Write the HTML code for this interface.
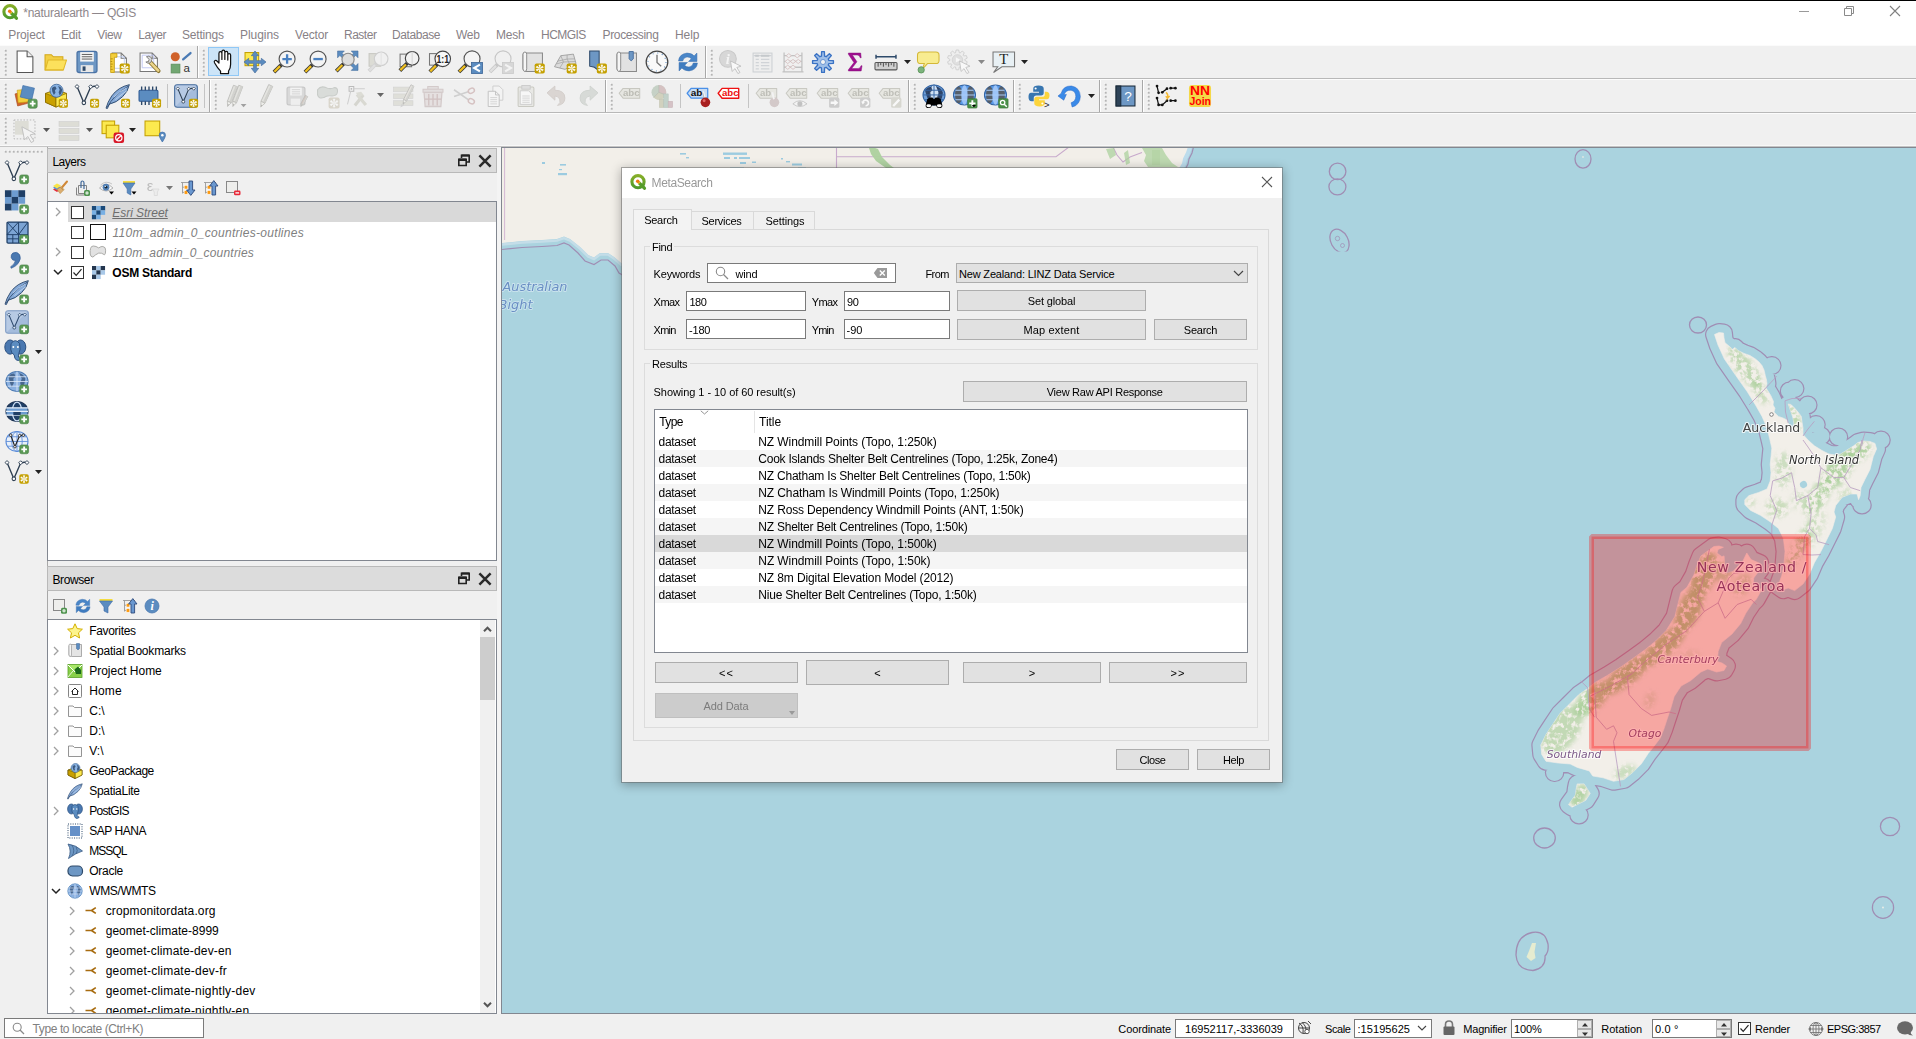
<!DOCTYPE html>
<html lang="en"><head><meta charset="utf-8"><title>*naturalearth — QGIS</title>
<style>
*{box-sizing:border-box;margin:0;padding:0}
html,body{width:1916px;height:1039px;overflow:hidden}
body{position:relative;background:#f0f0f0;font:12px "Liberation Sans",sans-serif;color:#000;-webkit-font-smoothing:antialiased}
.a{position:absolute}
.t{position:absolute;white-space:nowrap;line-height:14px}
.d{font-size:11px}
.btn{position:absolute;background:#e1e1e1;border:1px solid #adadad;text-align:center;font-size:11px;white-space:nowrap}
.inp{position:absolute;background:#fff;border:1px solid #7a7a7a;font-size:11px;white-space:nowrap}
.hl{position:absolute;height:1px}
.vl{position:absolute;width:1px}
.grp{position:absolute;border:1px solid #dcdcdc}
.ic{position:absolute;overflow:visible}
.row{position:absolute;left:1px;right:1px;height:17px}
</style></head>
<body>
<div class="a" style="left:0px;top:0px;width:1916px;height:1px;background:#000"></div>
<div class="a" style="left:0px;top:1px;width:1916px;height:44px;background:#fff"></div>
<svg class="ic" style="left:2px;top:4px" width="16" height="16" viewBox="0 0 16 16">
<defs><linearGradient id="qg2" x1="0" y1="0" x2="0" y2="1"><stop offset="0" stop-color="#86ae28"/><stop offset="1" stop-color="#4f9a2c"/></linearGradient></defs>
<circle cx="8" cy="7.7" r="6.1" fill="none" stroke="url(#qg2)" stroke-width="3.1"/>
<path d="M9.6 9.3 L14.4 14.2" stroke="#559c2a" stroke-width="3.3" stroke-linecap="round"/>
<path d="M8.4 8 L9.6 9.3" stroke="#d8c030" stroke-width="2.8" stroke-linecap="butt"/>
<circle cx="7.7" cy="7.2" r="1.75" fill="#ee7913"/>
</svg>
<div class="t" style="left:23.20px;top:6.00px;font-size:12px;letter-spacing:-0.229px;color:#8e878b">*naturalearth — QGIS</div>
<svg class="ic" style="left:1790px;top:2px" width="120" height="20" viewBox="0 0 120 20">
<path d="M9 9.5 H19" stroke="#9a9a9a" stroke-width="1" fill="none"/>
<path d="M54.5 6.5 H61.5 V13.5 H54.5 Z M56.5 6.5 V4.5 H63.5 V11.5 H61.5" stroke="#8a8a8a" stroke-width="1" fill="none"/>
<path d="M100 4 L110 14 M110 4 L100 14" stroke="#808080" stroke-width="1.1" fill="none"/>
</svg>
<div class="t" style="left:8.30px;top:27.60px;font-size:12px;letter-spacing:-0.121px;color:#878186">Project</div>
<div class="t" style="left:61.00px;top:27.60px;font-size:12px;letter-spacing:-0.219px;color:#878186">Edit</div>
<div class="t" style="left:97.20px;top:27.60px;font-size:12px;letter-spacing:-0.348px;color:#878186">View</div>
<div class="t" style="left:138.30px;top:27.60px;font-size:12px;letter-spacing:-0.464px;color:#878186">Layer</div>
<div class="t" style="left:182.00px;top:27.60px;font-size:12px;letter-spacing:-0.195px;color:#878186">Settings</div>
<div class="t" style="left:240.00px;top:27.60px;font-size:12px;letter-spacing:-0.051px;color:#878186">Plugins</div>
<div class="t" style="left:295.00px;top:27.60px;font-size:12px;letter-spacing:-0.170px;color:#878186">Vector</div>
<div class="t" style="left:344.00px;top:27.60px;font-size:12px;letter-spacing:-0.491px;color:#878186">Raster</div>
<div class="t" style="left:392.00px;top:27.60px;font-size:12px;letter-spacing:-0.421px;color:#878186">Database</div>
<div class="t" style="left:456.00px;top:27.60px;font-size:12px;letter-spacing:-0.286px;color:#878186">Web</div>
<div class="t" style="left:496.00px;top:27.60px;font-size:12px;letter-spacing:-0.236px;color:#878186">Mesh</div>
<div class="t" style="left:541.00px;top:27.60px;font-size:12px;letter-spacing:-0.533px;color:#878186">HCMGIS</div>
<div class="t" style="left:602.50px;top:27.60px;font-size:12px;letter-spacing:-0.336px;color:#878186">Processing</div>
<div class="t" style="left:675.00px;top:27.60px;font-size:12px;letter-spacing:-0.045px;color:#878186">Help</div>
<div class="a" style="left:0px;top:45px;width:1916px;height:1px;background:#fbfbfb"></div>
<div class="a" style="left:0px;top:78px;width:1916px;height:1px;background:#b8b8b8"></div>
<div class="a" style="left:0px;top:79px;width:1916px;height:1px;background:#fcfcfc"></div>
<div class="a" style="left:0px;top:112px;width:1916px;height:1px;background:#b8b8b8"></div>
<div class="a" style="left:0px;top:113px;width:1916px;height:1px;background:#fcfcfc"></div>
<svg class="ic" style="left:3.5px;top:49px" width="4" height="30"><rect x="0" y="0" width="2.6" height="2.6" fill="#fdfdfd"/><rect x=".7" y="0.7" width="2" height="2" fill="#b4b4b4"/><rect x="0" y="4" width="2.6" height="2.6" fill="#fdfdfd"/><rect x=".7" y="4.7" width="2" height="2" fill="#b4b4b4"/><rect x="0" y="8" width="2.6" height="2.6" fill="#fdfdfd"/><rect x=".7" y="8.7" width="2" height="2" fill="#b4b4b4"/><rect x="0" y="12" width="2.6" height="2.6" fill="#fdfdfd"/><rect x=".7" y="12.7" width="2" height="2" fill="#b4b4b4"/><rect x="0" y="16" width="2.6" height="2.6" fill="#fdfdfd"/><rect x=".7" y="16.7" width="2" height="2" fill="#b4b4b4"/><rect x="0" y="20" width="2.6" height="2.6" fill="#fdfdfd"/><rect x=".7" y="20.7" width="2" height="2" fill="#b4b4b4"/><rect x="0" y="24" width="2.6" height="2.6" fill="#fdfdfd"/><rect x=".7" y="24.7" width="2" height="2" fill="#b4b4b4"/></svg>
<svg class="ic" style="left:13.0px;top:49.8px" width="24" height="24" viewBox="0 0 24 24"><g transform="translate(12 12) scale(1.05) translate(-12 -12)"><path d="M4.5 1.5 H14 L19.5 7 V22 H4.5 Z" fill="#fff" stroke="#555" stroke-width="1"/><path d="M14 1.5 V7 H19.5" fill="#f0f0f0" stroke="#555" stroke-width="1" stroke-linejoin="round"/></g></svg>
<svg class="ic" style="left:43.0px;top:49.8px" width="24" height="24" viewBox="0 0 24 24"><g transform="translate(12 12) scale(1.05) translate(-12 -12)"><path d="M2.5 5 H8.5 L10.5 7 H19.5 V19.5 H2.5 Z" fill="#f2cf45" stroke="#d4a81a" stroke-width="1"/><path d="M2.8 19.5 L5.5 10 H23 L20 19.5 Z" fill="#fce15c" stroke="#e0b828" stroke-width="1" stroke-linejoin="round"/></g></svg>
<svg class="ic" style="left:75.0px;top:49.8px" width="24" height="24" viewBox="0 0 24 24"><g transform="translate(12 12) scale(1.05) translate(-12 -12)"><rect x="2.5" y="2" width="19" height="20" rx="1.8" fill="#6d97c4" stroke="#4a72a4" stroke-width="1.2"/><rect x="5.5" y="2.6" width="13" height="9" fill="#f6f6f6"/><path d="M7 4.8 H17 M7 7 H17 M7 9.2 H17" stroke="#555" stroke-width=".9"/><rect x="6" y="15" width="12" height="6.6" fill="#e8e8e8"/><rect x="7.8" y="16.2" width="2.8" height="4.2" fill="#2e4a6a"/></g></svg>
<svg class="ic" style="left:106.0px;top:49.8px" width="24" height="24" viewBox="0 0 24 24"><g transform="translate(12 12) scale(1.05) translate(-12 -12)"><path d="M6.5 3.5 H15 L20 8.5 V21.5 H6.5 Z" fill="#fff" stroke="#777" stroke-width="1"/><path d="M15 3.5 V8.5 H20" fill="none" stroke="#777"/><path d="M8.5 7 H18 V18 H8.5Z" fill="none" stroke="#b8c8f0" stroke-width=".8"/><path d="M5 4 H11 V7.5 H8.5 V22 H5 Z" fill="#f4cf3c" stroke="#c9a010" stroke-width=".8"/><path d="M5 9 H7 M5 11.5 H6.5 M5 14 H7 M5 16.5 H6.5 M5 19 H7" stroke="#a07c00" stroke-width=".7"/><rect x="13.6" y="13.4" width="9.6" height="9.6" rx="1.7" fill="#c4a000"/><path d="M18.40 18.60 L17.58 21.66 L19.22 21.66 Z M18.05 18.40 L15.00 19.22 L15.82 20.63 Z M18.05 18.00 L15.82 15.77 L15.00 17.18 Z M18.40 17.80 L19.22 14.74 L17.58 14.74 Z M18.75 18.00 L21.80 17.18 L20.98 15.77 Z M18.75 18.40 L20.98 20.63 L21.80 19.22 Z " fill="#fff" stroke="#fff" stroke-width=".5" stroke-linejoin="round"/></g></svg>
<svg class="ic" style="left:137.0px;top:49.8px" width="24" height="24" viewBox="0 0 24 24"><g transform="translate(12 12) scale(1.05) translate(-12 -12)"><path d="M3.5 3.5 H15 L20 8.5 V21 H3.5 Z" fill="#fff" stroke="#777" stroke-width="1"/><path d="M15 3.5 V8.5 H20" fill="none" stroke="#777"/><path d="M5.5 5.5 H16.5 V17.5 H5.5Z" fill="none" stroke="#b8c0f0" stroke-width=".8"/><path d="M13 12 L21 20.5" stroke="#8a7530" stroke-width="4" stroke-linecap="round"/><path d="M13.5 12.5 L20.8 20.2" stroke="#ecd58a" stroke-width="2.4" stroke-linecap="round"/><path d="M9.5 7 Q12 5.5 14 7.5 Q15.5 9.5 14 12 L12.5 13 Q10.5 13.5 9 12 L11.5 11.5 L12.2 9.5 Z" fill="#d8d8d8" stroke="#777" stroke-width=".8"/></g></svg>
<svg class="ic" style="left:168.0px;top:49.8px" width="24" height="24" viewBox="0 0 24 24"><g transform="translate(12 12) scale(1.05) translate(-12 -12)"><circle cx="7.5" cy="7" r="4.3" fill="#d0622a"/><rect x="3.5" y="14" width="8.5" height="8.5" fill="#72a772" stroke="#5a8a5a" stroke-width=".6"/><path d="M15 9.5 L22 3.5" stroke="#4a7ab4" stroke-width="2.2" stroke-linecap="round"/><text x="18.5" y="21.5" font-family="Liberation Sans,sans-serif" font-size="11" text-anchor="middle" fill="#333">a</text></g></svg>
<div class="a" style="left:197px;top:46px;width:1px;height:32px;background:#a8a8a8"></div><div class="a" style="left:198px;top:46px;width:1px;height:32px;background:#fff"></div>
<svg class="ic" style="left:201.5px;top:49px" width="4" height="30"><rect x="0" y="0" width="2.6" height="2.6" fill="#fdfdfd"/><rect x=".7" y="0.7" width="2" height="2" fill="#b4b4b4"/><rect x="0" y="4" width="2.6" height="2.6" fill="#fdfdfd"/><rect x=".7" y="4.7" width="2" height="2" fill="#b4b4b4"/><rect x="0" y="8" width="2.6" height="2.6" fill="#fdfdfd"/><rect x=".7" y="8.7" width="2" height="2" fill="#b4b4b4"/><rect x="0" y="12" width="2.6" height="2.6" fill="#fdfdfd"/><rect x=".7" y="12.7" width="2" height="2" fill="#b4b4b4"/><rect x="0" y="16" width="2.6" height="2.6" fill="#fdfdfd"/><rect x=".7" y="16.7" width="2" height="2" fill="#b4b4b4"/><rect x="0" y="20" width="2.6" height="2.6" fill="#fdfdfd"/><rect x=".7" y="20.7" width="2" height="2" fill="#b4b4b4"/><rect x="0" y="24" width="2.6" height="2.6" fill="#fdfdfd"/><rect x=".7" y="24.7" width="2" height="2" fill="#b4b4b4"/></svg>
<div class="a" style="left:208px;top:47px;width:31px;height:29px;background:#cce4f7;border:1px solid #90c8f6"></div>
<svg class="ic" style="left:211.0px;top:49.8px" width="24" height="24" viewBox="0 0 24 24"><g transform="translate(12 12) scale(1.05) translate(-12 -12)"><g transform="translate(12 12) scale(1.17) translate(-11.5 -12.6)"><path d="M8.2 13.5 V5.6 Q8.2 4.2 9.4 4.2 Q10.6 4.2 10.6 5.6 V10.5 V4.4 Q10.6 3 11.8 3 Q13 3 13 4.4 V10.5 V5.2 Q13 3.9 14.2 3.9 Q15.4 3.9 15.4 5.2 V11 V7 Q15.4 5.8 16.5 5.8 Q17.7 5.8 17.7 7 V14.5 Q17.7 18 16 20 V22 H9.5 V20 Q7 17.5 4.6 13.2 Q4 12 5 11.4 Q6 11 6.8 12 Z" fill="#fff" stroke="#111" stroke-width="1" stroke-linejoin="round"/></g></g></svg>
<svg class="ic" style="left:242.5px;top:49.8px" width="24" height="24" viewBox="0 0 24 24"><g transform="translate(12 12) scale(1.05) translate(-12 -12)"><rect x="2.5" y="3" width="13" height="12.5" fill="#fce94f" stroke="#c4a000" stroke-width="1"/><path d="M12 1.5 L15.5 6 H13.3 V10.7 H18 V8.5 L22.5 12 L18 15.5 V13.3 H13.3 V18 H15.5 L12 22.5 L8.5 18 H10.7 V13.3 H6 V15.5 L1.5 12 L6 8.5 V10.7 H10.7 V6 H8.5 Z" fill="#5b8cc0" stroke="#41699a" stroke-width=".6"/></g></svg>
<svg class="ic" style="left:273.0px;top:49.8px" width="24" height="24" viewBox="0 0 24 24"><g transform="translate(12 12) scale(1.05) translate(-12 -12)"><g opacity="1"><path d="M8.5 14.7 L1.5 21.7" stroke="#333" stroke-width="3.6" stroke-linecap="butt"/><path d="M7.3 15.9 L1.9 21.3" stroke="#f0c020" stroke-width="2.2"/><circle cx="14" cy="9.2" r="7.6" fill="#f4f4f4" stroke="#555" stroke-width="1.1"/></g><path d="M9.5 9.2 H18.5 M14 4.7 V13.7" stroke="#4a80c0" stroke-width="2.2"/></g></svg>
<svg class="ic" style="left:304.0px;top:49.8px" width="24" height="24" viewBox="0 0 24 24"><g transform="translate(12 12) scale(1.05) translate(-12 -12)"><g opacity="1"><path d="M8.5 14.7 L1.5 21.7" stroke="#333" stroke-width="3.6" stroke-linecap="butt"/><path d="M7.3 15.9 L1.9 21.3" stroke="#f0c020" stroke-width="2.2"/><circle cx="14" cy="9.2" r="7.6" fill="#f4f4f4" stroke="#555" stroke-width="1.1"/></g><path d="M9.5 9.2 H18.5" stroke="#4a80c0" stroke-width="2.2"/></g></svg>
<svg class="ic" style="left:335.0px;top:49.8px" width="24" height="24" viewBox="0 0 24 24"><g transform="translate(12 12) scale(1.05) translate(-12 -12)"><path d="M3 1.5 H9.5 L7.3 3.7 L10.5 7 L8.5 9 L5.2 5.8 L3 8 Z M22.5 1.5 V8 L20.3 5.8 L17 9 L15 7 L18.2 3.7 L16 1.5 Z M22.5 20 H16 L18.2 17.8 L15 14.5 L17 12.5 L20.3 15.8 L22.5 13.5 Z" fill="#5b8cc0" stroke="#41699a" stroke-width=".5"/><g opacity="1"><path d="M8.8 13.7 L1.8 20.7" stroke="#333" stroke-width="3.6" stroke-linecap="butt"/><path d="M7.6 14.9 L2.2 20.3" stroke="#f0c020" stroke-width="2.2"/><circle cx="13" cy="9.5" r="5.8" fill="#ddd" stroke="#888" stroke-width="1.1"/></g></g></svg>
<svg class="ic" style="left:366.0px;top:49.8px" width="24" height="24" viewBox="0 0 24 24"><g transform="translate(12 12) scale(1.05) translate(-12 -12)"><g opacity="0.82"><rect x="3.5" y="4" width="11" height="12" fill="#d8d8d0" stroke="#c0c0b8"/><g opacity="1"><path d="M10.3 13.7 L3.3 20.7" stroke="#ccc" stroke-width="3.6" stroke-linecap="butt"/><path d="M9.1 14.9 L3.7 20.3" stroke="#ddd" stroke-width="2.2"/><circle cx="15" cy="9" r="6.5" fill="#f0f0f0" stroke="#c8c8c8" stroke-width="1.1"/></g><path d="M15 2.5 V15.5" stroke="#ddd" stroke-width=".8"/></g></g></svg>
<svg class="ic" style="left:397.0px;top:49.8px" width="24" height="24" viewBox="0 0 24 24"><g transform="translate(12 12) scale(1.05) translate(-12 -12)"><rect x="3.5" y="4.5" width="11" height="12" fill="#ececec" stroke="#777"/><g opacity="1"><path d="M10.3 13.2 L3.3 20.2" stroke="#333" stroke-width="3.6" stroke-linecap="butt"/><path d="M9.1 14.4 L3.7 19.8" stroke="#f0c020" stroke-width="2.2"/><circle cx="15" cy="8.5" r="6.5" fill="#f2f2f2" stroke="#444" stroke-width="1.1"/></g><path d="M15 2 V15" stroke="#ccc" stroke-width=".8"/></g></svg>
<svg class="ic" style="left:428.0px;top:49.8px" width="24" height="24" viewBox="0 0 24 24"><g transform="translate(12 12) scale(1.05) translate(-12 -12)"><rect x="2" y="4" width="10" height="11" fill="#ececec" stroke="#777"/><g opacity="1"><path d="M9.3 14.3 L2.3 21.3" stroke="#333" stroke-width="3.6" stroke-linecap="butt"/><path d="M8.1 15.5 L2.7 20.9" stroke="#f0c020" stroke-width="2.2"/><circle cx="14.6" cy="9" r="7.4" fill="#f8f8f8" stroke="#444" stroke-width="1.1"/></g><text x="8.6" y="12.6" font-family="Liberation Sans,sans-serif" font-weight="bold" font-size="10" fill="#222" textLength="12" lengthAdjust="spacingAndGlyphs">1:1</text></g></svg>
<svg class="ic" style="left:459.0px;top:49.8px" width="24" height="24" viewBox="0 0 24 24"><g transform="translate(12 12) scale(1.05) translate(-12 -12)"><g opacity="1"><path d="M7.5 14.5 L0.5 21.5" stroke="#333" stroke-width="3.6" stroke-linecap="butt"/><path d="M6.3 15.7 L0.9 21.1" stroke="#f0c020" stroke-width="2.2"/><circle cx="13" cy="9" r="7.6" fill="#f4f4f4" stroke="#555" stroke-width="1.1"/></g><rect x="12.5" y="12.5" width="10.5" height="10.5" fill="#5b8cc0" stroke="#41699a" stroke-width=".8"/><path d="M20.5 14.5 L15 17.7 L20.5 21" stroke="#fff" stroke-width="2" fill="none"/></g></svg>
<svg class="ic" style="left:490.0px;top:49.8px" width="24" height="24" viewBox="0 0 24 24"><g transform="translate(12 12) scale(1.05) translate(-12 -12)"><g opacity="0.78"><g opacity="1"><path d="M7.5 14.5 L0.5 21.5" stroke="#bbb" stroke-width="3.6" stroke-linecap="butt"/><path d="M6.3 15.7 L0.9 21.1" stroke="#ddd" stroke-width="2.2"/><circle cx="13" cy="9" r="7.6" fill="#f0f0f0" stroke="#bbb" stroke-width="1.1"/></g><rect x="12.5" y="12.5" width="10.5" height="10.5" fill="#d0d0d0" stroke="#c0c0c0" stroke-width=".8"/><path d="M15 14.5 L20.5 17.7 L15 21" stroke="#f4f4f4" stroke-width="2" fill="none"/></g></g></svg>
<svg class="ic" style="left:521.0px;top:49.8px" width="24" height="24" viewBox="0 0 24 24"><g transform="translate(12 12) scale(1.05) translate(-12 -12)"><path d="M4 3.5 H21 V21 H6 Q2.5 21 2.5 18 V5 Q2.5 3.5 4 3.5" fill="#e2e2e2" stroke="#8a8a8a" stroke-width="1"/><path d="M2.5 4.5 Q2.5 2.5 4.3 2.5 Q6 2.5 6 4.5 V18.5 Q6 21 4.2 21 Q2.5 20.5 2.5 18.5 Z" fill="#f6f6f6" stroke="#8a8a8a" stroke-width=".9"/><rect x="13.6" y="13.4" width="9.6" height="9.6" rx="1.7" fill="#c4a000"/><path d="M18.40 18.60 L17.58 21.66 L19.22 21.66 Z M18.05 18.40 L15.00 19.22 L15.82 20.63 Z M18.05 18.00 L15.82 15.77 L15.00 17.18 Z M18.40 17.80 L19.22 14.74 L17.58 14.74 Z M18.75 18.00 L21.80 17.18 L20.98 15.77 Z M18.75 18.40 L20.98 20.63 L21.80 19.22 Z " fill="#fff" stroke="#fff" stroke-width=".5" stroke-linejoin="round"/></g></svg>
<svg class="ic" style="left:552.5px;top:49.8px" width="24" height="24" viewBox="0 0 24 24"><g transform="translate(12 12) scale(1.05) translate(-12 -12)"><path d="M2 16.5 L8 6 L20 4.5 L22.5 13.5 L12 19 Z" fill="#dcdcdc" stroke="#999" stroke-width=".8"/><path d="M5 11.2 L14 9.2 L21.3 9 M8 6 L10.5 12 L7 17.8 M14 5.2 L14 9.2 L17.5 16 M4 13.8 L10.5 12 L22 11.5" stroke="#a4a4a4" stroke-width=".7" fill="none"/><rect x="13.6" y="13.4" width="9.6" height="9.6" rx="1.7" fill="#c4a000"/><path d="M18.40 18.60 L17.58 21.66 L19.22 21.66 Z M18.05 18.40 L15.00 19.22 L15.82 20.63 Z M18.05 18.00 L15.82 15.77 L15.00 17.18 Z M18.40 17.80 L19.22 14.74 L17.58 14.74 Z M18.75 18.00 L21.80 17.18 L20.98 15.77 Z M18.75 18.40 L20.98 20.63 L21.80 19.22 Z " fill="#fff" stroke="#fff" stroke-width=".5" stroke-linejoin="round"/></g></svg>
<svg class="ic" style="left:584.0px;top:49.8px" width="24" height="24" viewBox="0 0 24 24"><g transform="translate(12 12) scale(1.05) translate(-12 -12)"><path d="M6 1.5 H15 V20.5 L10.5 17 L6 16 Z" fill="#6d97c4" stroke="#2e4a6a" stroke-width="1"/><rect x="12.8" y="13.4" width="9.6" height="9.6" rx="1.7" fill="#c4a000"/><path d="M17.60 18.60 L16.78 21.66 L18.42 21.66 Z M17.25 18.40 L14.20 19.22 L15.02 20.63 Z M17.25 18.00 L15.02 15.77 L14.20 17.18 Z M17.60 17.80 L18.42 14.74 L16.78 14.74 Z M17.95 18.00 L21.00 17.18 L20.18 15.77 Z M17.95 18.40 L20.18 20.63 L21.00 19.22 Z " fill="#fff" stroke="#fff" stroke-width=".5" stroke-linejoin="round"/></g></svg>
<svg class="ic" style="left:614.5px;top:49.8px" width="24" height="24" viewBox="0 0 24 24"><g transform="translate(12 12) scale(1.05) translate(-12 -12)"><path d="M4 3.5 H21 V21 H6 Q2.5 21 2.5 18 V5 Q2.5 3.5 4 3.5" fill="#e2e2e2" stroke="#8a8a8a" stroke-width="1"/><path d="M2.5 4.5 Q2.5 2.5 4.3 2.5 Q6 2.5 6 4.5 V18.5 Q6 21 4.2 21 Q2.5 20.5 2.5 18.5 Z" fill="#f6f6f6" stroke="#8a8a8a" stroke-width=".9"/><path d="M14 2 H18 V9 L16 11 L14 9 Z" fill="#6d97c4" stroke="#41699a" stroke-width=".8"/></g></svg>
<svg class="ic" style="left:645.0px;top:49.8px" width="24" height="24" viewBox="0 0 24 24"><g transform="translate(12 12) scale(1.05) translate(-12 -12)"><circle cx="12" cy="12" r="10.3" fill="#fafafa" stroke="#444" stroke-width="1.2"/><circle cx="12" cy="12" r="8.6" fill="none" stroke="#5b8cc0" stroke-width="1" stroke-dasharray="1 3.5"/><path d="M12 5 V12.5 L16 16" stroke="#777" stroke-width="1.3" fill="none"/></g></svg>
<svg class="ic" style="left:675.5px;top:49.8px" width="24" height="24" viewBox="0 0 24 24"><g transform="translate(12 12) scale(1.05) translate(-12 -12)"><path d="M3 11 Q3.5 4.5 11 3.5 Q15.5 3.5 17.8 6.2 L20.5 3.5 V11.5 H12.5 L15.2 8.8 Q13.5 7 11 7.2 Q7.5 7.8 7 11 Z" fill="#4a86c8" stroke="#3a70b0" stroke-width=".5"/><path d="M21 13 Q20.5 19.5 13 20.5 Q8.5 20.5 6.2 17.8 L3.5 20.5 V12.5 H11.5 L8.8 15.2 Q10.5 17 13 16.8 Q16.5 16.2 17 13 Z" fill="#3f7cc0" stroke="#3a70b0" stroke-width=".5"/></g></svg>
<div class="a" style="left:705px;top:46px;width:1px;height:32px;background:#a8a8a8"></div><div class="a" style="left:706px;top:46px;width:1px;height:32px;background:#fff"></div>
<svg class="ic" style="left:709.5px;top:49px" width="4" height="30"><rect x="0" y="0" width="2.6" height="2.6" fill="#fdfdfd"/><rect x=".7" y="0.7" width="2" height="2" fill="#b4b4b4"/><rect x="0" y="4" width="2.6" height="2.6" fill="#fdfdfd"/><rect x=".7" y="4.7" width="2" height="2" fill="#b4b4b4"/><rect x="0" y="8" width="2.6" height="2.6" fill="#fdfdfd"/><rect x=".7" y="8.7" width="2" height="2" fill="#b4b4b4"/><rect x="0" y="12" width="2.6" height="2.6" fill="#fdfdfd"/><rect x=".7" y="12.7" width="2" height="2" fill="#b4b4b4"/><rect x="0" y="16" width="2.6" height="2.6" fill="#fdfdfd"/><rect x=".7" y="16.7" width="2" height="2" fill="#b4b4b4"/><rect x="0" y="20" width="2.6" height="2.6" fill="#fdfdfd"/><rect x=".7" y="20.7" width="2" height="2" fill="#b4b4b4"/><rect x="0" y="24" width="2.6" height="2.6" fill="#fdfdfd"/><rect x=".7" y="24.7" width="2" height="2" fill="#b4b4b4"/></svg>
<svg class="ic" style="left:718.0px;top:49.8px" width="24" height="24" viewBox="0 0 24 24"><g transform="translate(12 12) scale(1.05) translate(-12 -12)"><g opacity="0.88"><circle cx="10" cy="9" r="8" fill="#d4d4d4" stroke="#c4c4c4"/><text x="10" y="14" font-family="Liberation Serif,serif" font-style="italic" font-weight="bold" font-size="14" text-anchor="middle" fill="#f4f4f4">i</text><path d="M12.5 11 L22.5 16 L18.5 17.2 L21.5 22 L19.5 23 L16.8 18.3 L14 21 Z" fill="#fafafa" stroke="#bbb" stroke-width=".9"/></g></g></svg>
<svg class="ic" style="left:750.0px;top:49.8px" width="24" height="24" viewBox="0 0 24 24"><g transform="translate(12 12) scale(1.05) translate(-12 -12)"><g opacity="0.88"><rect x="3.5" y="3.5" width="18" height="18" fill="#eeeeee" stroke="#c8ccd0"/><path d="M4 6 H21 M6 9.5 H9 M11 9.5 H19 M6 12.5 H9 M11 12.5 H19 M6 15.5 H9 M11 15.5 H19 M6 18.5 H9 M11 18.5 H19" stroke="#ccd0d4" stroke-width="1.2"/><path d="M5.5 6 H9 M11 6 H19" stroke="#c0c4c8" stroke-width="2"/></g></g></svg>
<svg class="ic" style="left:781.0px;top:49.8px" width="24" height="24" viewBox="0 0 24 24"><g transform="translate(12 12) scale(1.05) translate(-12 -12)"><g opacity="0.88"><path d="M3.5 3 V21 M20.5 3 V21 M2 21.5 H22 M3.5 6 H20.5 M3.5 11.5 H20.5 M3.5 17 H20.5" stroke="#bbb" stroke-width="1.2" fill="none"/><path d="M8 4 L10.5 6 L8 8 L5.5 6Z M16 4 L18.5 6 L16 8 L13.5 6Z M7 9.5 L9.5 11.5 L7 13.5 L4.5 11.5Z M12 9.5 L14.5 11.5 L12 13.5 L9.5 11.5Z M17 9.5 L19.5 11.5 L17 13.5 L14.5 11.5Z M7 15 L9.5 17 L7 19 L4.5 17Z M12 15 L14.5 17 L12 19 L9.5 17Z" fill="#f0f0f0" stroke="#d0b8b8" stroke-width=".8"/></g></g></svg>
<svg class="ic" style="left:811.0px;top:49.8px" width="24" height="24" viewBox="0 0 24 24"><g transform="translate(12 12) scale(1.05) translate(-12 -12)"><path d="M10.51 6.39 L10.70 2.08 L13.30 2.08 L13.49 6.39 L14.91 6.98 L18.09 4.07 L19.93 5.91 L17.02 9.09 L17.61 10.51 L21.92 10.70 L21.92 13.30 L17.61 13.49 L17.02 14.91 L19.93 18.09 L18.09 19.93 L14.91 17.02 L13.49 17.61 L13.30 21.92 L10.70 21.92 L10.51 17.61 L9.09 17.02 L5.91 19.93 L4.07 18.09 L6.98 14.91 L6.39 13.49 L2.08 13.30 L2.08 10.70 L6.39 10.51 L6.98 9.09 L4.07 5.91 L5.91 4.07 L9.09 6.98 Z" fill="#9fbfe8" stroke="#3a72c4" stroke-width="1.3" stroke-linejoin="round"/><circle cx="12" cy="12" r="2.4" fill="#f4f4f4" stroke="#3a72c4" stroke-width=".6"/></g></svg>
<svg class="ic" style="left:842.5px;top:49.8px" width="24" height="24" viewBox="0 0 24 24"><g transform="translate(12 12) scale(1.05) translate(-12 -12)"><g transform="translate(12 12) scale(.84 .9) translate(-12 -12)"><path d="M4.5 2.5 H18.5 L19 7.5 H17.8 Q17.3 4.6 14.5 4.6 H9 L14.2 11.8 L8.2 19 H15 Q18 19 18.8 16 H20 L19 21.5 H4.5 V20.3 L10.8 12.6 L4.5 3.8 Z" fill="#a01090" stroke="#800878" stroke-width=".5"/></g></g></svg>
<svg class="ic" style="left:873.5px;top:49.8px" width="24" height="24" viewBox="0 0 24 24"><g transform="translate(12 12) scale(1.05) translate(-12 -12)"><path d="M2 7 H22 M2.5 5 V9 M21.5 5 V9" stroke="#2e4a6a" stroke-width="1.4" fill="none"/><rect x="1.5" y="12.5" width="21" height="7" rx="1" fill="#d0d0d0" stroke="#555" stroke-width="1"/><path d="M4.5 13 V16.5 M7 13 V15 M9.5 13 V16.5 M12 13 V15 M14.5 13 V16.5 M17 13 V15 M19.5 13 V16.5" stroke="#444" stroke-width=".9"/></g></svg>
<svg class="ic" style="left:916.0px;top:49.8px" width="24" height="24" viewBox="0 0 24 24"><g transform="translate(12 12) scale(1.05) translate(-12 -12)"><path d="M5 2.5 H19.5 Q22.5 2.5 22.5 5.5 V10.5 Q22.5 13.5 19.5 13.5 H11.5 L6.5 19 L8.5 13.5 H5 Q2 13.5 2 10.5 V5.5 Q2 2.5 5 2.5 Z" fill="#f8ec90" stroke="#d4b838" stroke-width="1"/><circle cx="5.5" cy="19.5" r="3" fill="#7cb47c" stroke="#5a945a" stroke-width=".8"/></g></svg>
<svg class="ic" style="left:947.0px;top:49.8px" width="24" height="24" viewBox="0 0 24 24"><g transform="translate(12 12) scale(1.05) translate(-12 -12)"><g opacity="0.82"><path d="M8.70 3.24 L9.27 0.58 L11.73 0.58 L12.30 3.24 L13.02 3.47 L15.04 1.66 L17.03 3.10 L15.93 5.58 L16.38 6.20 L19.08 5.92 L19.84 8.26 L17.49 9.62 L17.49 10.38 L19.84 11.74 L19.08 14.08 L16.38 13.80 L15.93 14.42 L17.03 16.90 L15.04 18.34 L13.02 16.53 L12.30 16.76 L11.73 19.42 L9.27 19.42 L8.70 16.76 L7.98 16.53 L5.96 18.34 L3.97 16.90 L5.07 14.42 L4.62 13.80 L1.92 14.08 L1.16 11.74 L3.51 10.38 L3.51 9.62 L1.16 8.26 L1.92 5.92 L4.62 6.20 L5.07 5.58 L3.97 3.10 L5.96 1.66 L7.98 3.47 Z" fill="#eeeeee" stroke="#c4c4c4" stroke-width=".8" stroke-linejoin="round"/><circle cx="10.5" cy="10" r="5" fill="#dcdcdc" stroke="#c4c4c4" stroke-width=".6"/><path d="M9 7.5 L13.5 10 L9 12.5 Z" fill="#f8f8f8"/><path d="M12.5 11 L22.5 16 L18.5 17.2 L21.5 22 L19.5 23 L16.8 18.3 L14 21 Z" fill="#fafafa" stroke="#bbb" stroke-width=".9"/></g></g></svg>
<svg class="ic" style="left:990.5px;top:49.8px" width="24" height="24" viewBox="0 0 24 24"><g transform="translate(12 12) scale(1.05) translate(-12 -12)"><path d="M2.5 2.5 H23 V16.5 H11 L3 22 L7 16.5 H2.5 Z" fill="#e8f0f4" stroke="#777" stroke-width="1"/><text x="12.8" y="14" font-family="Liberation Serif,serif" font-size="14" text-anchor="middle" fill="#222">T</text></g></svg>
<svg class="ic" style="left:903.5px;top:60.0px" width="7" height="4" viewBox="0 0 7 4"><path d="M0 0 H7 L3.5 4 Z" fill="#222"/></svg>
<svg class="ic" style="left:977.5px;top:60.0px" width="7" height="4" viewBox="0 0 7 4"><path d="M0 0 H7 L3.5 4 Z" fill="#888"/></svg>
<svg class="ic" style="left:1020.5px;top:60.0px" width="7" height="4" viewBox="0 0 7 4"><path d="M0 0 H7 L3.5 4 Z" fill="#222"/></svg>
<svg class="ic" style="left:3.5px;top:83px" width="4" height="30"><rect x="0" y="0" width="2.6" height="2.6" fill="#fdfdfd"/><rect x=".7" y="0.7" width="2" height="2" fill="#b4b4b4"/><rect x="0" y="4" width="2.6" height="2.6" fill="#fdfdfd"/><rect x=".7" y="4.7" width="2" height="2" fill="#b4b4b4"/><rect x="0" y="8" width="2.6" height="2.6" fill="#fdfdfd"/><rect x=".7" y="8.7" width="2" height="2" fill="#b4b4b4"/><rect x="0" y="12" width="2.6" height="2.6" fill="#fdfdfd"/><rect x=".7" y="12.7" width="2" height="2" fill="#b4b4b4"/><rect x="0" y="16" width="2.6" height="2.6" fill="#fdfdfd"/><rect x=".7" y="16.7" width="2" height="2" fill="#b4b4b4"/><rect x="0" y="20" width="2.6" height="2.6" fill="#fdfdfd"/><rect x=".7" y="20.7" width="2" height="2" fill="#b4b4b4"/><rect x="0" y="24" width="2.6" height="2.6" fill="#fdfdfd"/><rect x=".7" y="24.7" width="2" height="2" fill="#b4b4b4"/></svg>
<svg class="ic" style="left:13.0px;top:84.0px" width="24" height="24" viewBox="0 0 24 24"><g transform="translate(12 12) scale(1.05) translate(-12 -12)"><path d="M2.5 10 L12 7.5 L14.5 19 L5 21.5 Z" fill="#d0622a" stroke="#a84a1a" stroke-width=".6"/><path d="M4.5 6.5 L14.5 5.5 L15.5 17.5 L5.5 18.5 Z" fill="#f4cf3c" stroke="#c9a010" stroke-width=".6"/><path d="M10 2 L21 4.5 L18.5 15.5 L7.5 13 Z" fill="#5b8cc0" stroke="#3a6aa8" stroke-width=".6"/><rect x="15" y="15" width="8.6" height="8.6" rx="1.8" fill="#5a9a55" stroke="#4a8045" stroke-width=".6"/><path d="M16.548000000000002 19.3 H22.052 M19.3 16.548000000000002 V22.052" stroke="#fff" stroke-width="1.8"/></g></svg>
<svg class="ic" style="left:44.0px;top:84.0px" width="24" height="24" viewBox="0 0 24 24"><g transform="translate(12 12) scale(1.05) translate(-12 -12)"><path d="M2 9.5 L12 6 L22 9.5 V18 L12 22.5 L2 18 Z" fill="#e8c818" stroke="#8a6c00" stroke-width=".9"/><path d="M2 9.5 L12 13.5 V22.5 L2 18 Z" fill="#c9a000" stroke="#8a6c00" stroke-width=".7"/><path d="M12 13.5 L22 9.5 V18 L12 22.5Z" fill="#fce94f" stroke="#8a6c00" stroke-width=".7"/><circle cx="12.5" cy="7" r="6.2" fill="#8ab4e4" stroke="#41699a" stroke-width=".8"/><path d="M8 4.5 Q9.5 2.5 11.5 3 L12.5 5 L11 6.5 L11.5 9 L10 11 L8.5 8 Z M14 2.5 Q17 3 18 6 L17 9.5 L15.5 11.5 L14.5 8.5 L15.5 6 Z" fill="#2e4a6e" opacity=".85"/><rect x="14.6" y="14.5" width="8.8" height="8.8" rx="1.7" fill="#c4a000"/><path d="M19.00 19.30 L18.25 22.07 L19.75 22.07 Z M18.65 19.10 L15.88 19.84 L16.63 21.13 Z M18.65 18.70 L16.63 16.67 L15.88 17.96 Z M19.00 18.50 L19.75 15.73 L18.25 15.73 Z M19.35 18.70 L22.12 17.96 L21.37 16.67 Z M19.35 19.10 L21.37 21.13 L22.12 19.84 Z " fill="#fff" stroke="#fff" stroke-width=".5" stroke-linejoin="round"/></g></svg>
<svg class="ic" style="left:75.0px;top:84.0px" width="24" height="24" viewBox="0 0 24 24"><g transform="translate(12 12) scale(1.05) translate(-12 -12)"><path d="M2.5 3 L9 18.5 L15.5 3.5 Q18.5 2.2 21.5 3" stroke="#2e3f52" stroke-width="1.3" fill="none"/><path d="M0.6000000000000001 3 L2.5 1.1 L4.4 3 L2.5 4.9 Z" fill="#fff" stroke="#2e3f52" stroke-width=".9"/><path d="M13.6 3.2 L15.5 1.3000000000000003 L17.4 3.2 L15.5 5.1 Z" fill="#fff" stroke="#2e3f52" stroke-width=".9"/><path d="M19.6 3 L21.5 1.1 L23.4 3 L21.5 4.9 Z" fill="#fff" stroke="#2e3f52" stroke-width=".9"/><circle cx="9" cy="18.5" r="1.7" fill="#fff" stroke="#2e3f52" stroke-width="1"/><rect x="14.9" y="14.7" width="8.6" height="8.6" rx="1.7" fill="#c4a000"/><path d="M19.20 19.40 L18.47 22.10 L19.93 22.10 Z M18.85 19.20 L16.15 19.91 L16.88 21.18 Z M18.85 18.80 L16.88 16.82 L16.15 18.09 Z M19.20 18.60 L19.93 15.90 L18.47 15.90 Z M19.55 18.80 L22.25 18.09 L21.52 16.82 Z M19.55 19.20 L21.52 21.18 L22.25 19.91 Z " fill="#fff" stroke="#fff" stroke-width=".5" stroke-linejoin="round"/></g></svg>
<svg class="ic" style="left:106.0px;top:84.0px" width="24" height="24" viewBox="0 0 24 24"><g transform="translate(12 12) scale(1.05) translate(-12 -12)"><path d="M22.8 1.2 Q12 3.6 6 12 Q2 18 0.6 23.6 L2 23.8 Q2.6 21.4 4.2 19.6 Q10.5 18.4 16.4 12.6 Q21.6 7.6 22.8 1.2 Z" fill="#86aad8" stroke="#2e4a6e" stroke-width=".9" stroke-linejoin="round"/><path d="M2 22.5 Q7.5 11.5 21.5 2.8" stroke="#2e4a6e" stroke-width=".8" fill="none"/><path d="M8 13 Q13 8 20 4.5 M9.5 15.5 Q14 11.5 20.5 7" stroke="#c4d8f0" stroke-width=".8" fill="none"/><rect x="14.9" y="14.7" width="8.6" height="8.6" rx="1.7" fill="#c4a000"/><path d="M19.20 19.40 L18.47 22.10 L19.93 22.10 Z M18.85 19.20 L16.15 19.91 L16.88 21.18 Z M18.85 18.80 L16.88 16.82 L16.15 18.09 Z M19.20 18.60 L19.93 15.90 L18.47 15.90 Z M19.55 18.80 L22.25 18.09 L21.52 16.82 Z M19.55 19.20 L21.52 21.18 L22.25 19.91 Z " fill="#fff" stroke="#fff" stroke-width=".5" stroke-linejoin="round"/></g></svg>
<svg class="ic" style="left:137.0px;top:84.0px" width="24" height="24" viewBox="0 0 24 24"><g transform="translate(12 12) scale(1.05) translate(-12 -12)"><rect x="2.5" y="6.5" width="18" height="10.5" rx="1" fill="#5b8cc0" stroke="#2e5a94" stroke-width="1"/><path d="M5 3 V6.5 M8.5 3 V6.5 M12 3 V6.5 M15.5 3 V6.5 M19 3 V6.5 M5 17 V20.5 M8.5 17 V20.5 M12 17 V20.5" stroke="#2e4a6a" stroke-width="1.3"/><rect x="14.9" y="14.7" width="8.6" height="8.6" rx="1.7" fill="#c4a000"/><path d="M19.20 19.40 L18.47 22.10 L19.93 22.10 Z M18.85 19.20 L16.15 19.91 L16.88 21.18 Z M18.85 18.80 L16.88 16.82 L16.15 18.09 Z M19.20 18.60 L19.93 15.90 L18.47 15.90 Z M19.55 18.80 L22.25 18.09 L21.52 16.82 Z M19.55 19.20 L21.52 21.18 L22.25 19.91 Z " fill="#fff" stroke="#fff" stroke-width=".5" stroke-linejoin="round"/></g></svg>
<svg class="ic" style="left:174.0px;top:84.0px" width="24" height="24" viewBox="0 0 24 24"><g transform="translate(12 12) scale(1.05) translate(-12 -12)"><rect x="1.2" y="1.2" width="21.6" height="21.6" rx="2.4" fill="#a4bcdc" stroke="#41699a" stroke-width="1"/><path d="M2 2 H22 L2 22 Z" fill="#c4d4ea" opacity=".6"/><g transform="translate(2.2 2.6) scale(.8)"><path d="M2.5 3 L9 18.5 L15.5 3.5 Q18.5 2.2 21.5 3" stroke="#2e3f52" stroke-width="1.3" fill="none"/><path d="M0.6000000000000001 3 L2.5 1.1 L4.4 3 L2.5 4.9 Z" fill="#fff" stroke="#2e3f52" stroke-width=".9"/><path d="M13.6 3.2 L15.5 1.3000000000000003 L17.4 3.2 L15.5 5.1 Z" fill="#fff" stroke="#2e3f52" stroke-width=".9"/><path d="M19.6 3 L21.5 1.1 L23.4 3 L21.5 4.9 Z" fill="#fff" stroke="#2e3f52" stroke-width=".9"/><circle cx="9" cy="18.5" r="1.7" fill="#fff" stroke="#2e3f52" stroke-width="1"/></g><rect x="14.9" y="14.7" width="8.6" height="8.6" rx="1.7" fill="#c4a000"/><path d="M19.20 19.40 L18.47 22.10 L19.93 22.10 Z M18.85 19.20 L16.15 19.91 L16.88 21.18 Z M18.85 18.80 L16.88 16.82 L16.15 18.09 Z M19.20 18.60 L19.93 15.90 L18.47 15.90 Z M19.55 18.80 L22.25 18.09 L21.52 16.82 Z M19.55 19.20 L21.52 21.18 L22.25 19.91 Z " fill="#fff" stroke="#fff" stroke-width=".5" stroke-linejoin="round"/></g></svg>
<div class="a" style="left:167px;top:84px;width:1px;height:24px;background:#c4c4c4"></div>
<div class="a" style="left:204px;top:84px;width:1px;height:24px;background:#c4c4c4"></div>
<div class="a" style="left:209px;top:80px;width:1px;height:32px;background:#a8a8a8"></div><div class="a" style="left:210px;top:80px;width:1px;height:32px;background:#fff"></div>
<svg class="ic" style="left:213.5px;top:83px" width="4" height="30"><rect x="0" y="0" width="2.6" height="2.6" fill="#fdfdfd"/><rect x=".7" y="0.7" width="2" height="2" fill="#b4b4b4"/><rect x="0" y="4" width="2.6" height="2.6" fill="#fdfdfd"/><rect x=".7" y="4.7" width="2" height="2" fill="#b4b4b4"/><rect x="0" y="8" width="2.6" height="2.6" fill="#fdfdfd"/><rect x=".7" y="8.7" width="2" height="2" fill="#b4b4b4"/><rect x="0" y="12" width="2.6" height="2.6" fill="#fdfdfd"/><rect x=".7" y="12.7" width="2" height="2" fill="#b4b4b4"/><rect x="0" y="16" width="2.6" height="2.6" fill="#fdfdfd"/><rect x=".7" y="16.7" width="2" height="2" fill="#b4b4b4"/><rect x="0" y="20" width="2.6" height="2.6" fill="#fdfdfd"/><rect x=".7" y="20.7" width="2" height="2" fill="#b4b4b4"/><rect x="0" y="24" width="2.6" height="2.6" fill="#fdfdfd"/><rect x=".7" y="24.7" width="2" height="2" fill="#b4b4b4"/></svg>
<svg class="ic" style="left:223.5px;top:84.0px" width="24" height="24" viewBox="0 0 24 24"><g transform="translate(12 12) scale(1.05) translate(-12 -12)"><g opacity="0.9"><g opacity="1"><path d="M9.6 1.8 L13.4 3.2 L7.5 18.4 L3.8 17.0 Z" fill="#e2e2de" stroke="#b4b4b0" stroke-width=".8" stroke-linejoin="round"/><path d="M11.5 2.5 L13.4 3.2 L7.5 18.4 L5.6 17.7 Z" fill="#cfcfcb"/><path d="M7.5 18.4 L3.8 17.0 L4.0 22.0 Z" fill="#eeeeea" stroke="#b4b4b0" stroke-width=".7" stroke-linejoin="round"/><path d="M5.3 20.2 L4.2 19.7 L4.0 22.0 Z" fill="#a8a8a4"/></g><g opacity="1"><path d="M14.6 1.8 L18.4 3.2 L12.5 18.4 L8.8 17.0 Z" fill="#e2e2de" stroke="#b4b4b0" stroke-width=".8" stroke-linejoin="round"/><path d="M16.5 2.5 L18.4 3.2 L12.5 18.4 L10.6 17.7 Z" fill="#cfcfcb"/><path d="M12.5 18.4 L8.8 17.0 L9.0 22.0 Z" fill="#eeeeea" stroke="#b4b4b0" stroke-width=".7" stroke-linejoin="round"/><path d="M10.3 20.2 L9.2 19.7 L9.0 22.0 Z" fill="#a8a8a4"/></g><path d="M16.5 19.5 H22 L19.2 22.8 Z" fill="#999"/></g></g></svg>
<svg class="ic" style="left:253.5px;top:84.0px" width="24" height="24" viewBox="0 0 24 24"><g transform="translate(12 12) scale(1.05) translate(-12 -12)"><g opacity="0.9"><g opacity="1"><path d="M14.6 1.1 L18.4 2.9 L11.0 18.9 L7.2 17.1 Z" fill="#e2e2de" stroke="#b4b4b0" stroke-width=".8" stroke-linejoin="round"/><path d="M16.5 2.0 L18.4 2.9 L11.0 18.9 L9.1 18.0 Z" fill="#cfcfcb"/><path d="M11.0 18.9 L7.2 17.1 L7.0 22.5 Z" fill="#eeeeea" stroke="#b4b4b0" stroke-width=".7" stroke-linejoin="round"/><path d="M8.5 20.8 L7.4 20.3 L7.0 22.5 Z" fill="#a8a8a4"/></g></g></g></svg>
<svg class="ic" style="left:284.0px;top:84.0px" width="24" height="24" viewBox="0 0 24 24"><g transform="translate(12 12) scale(1.05) translate(-12 -12)"><g opacity="0.82"><rect x="3.5" y="3.5" width="17" height="17" rx="1.8" fill="#d4d4d4" stroke="#c0c0c0" stroke-width="1.2"/><rect x="6.5" y="4" width="11" height="7.5" fill="#f4f4f4"/><path d="M8 6 H16 M8 8 H16 M8 10 H16" stroke="#ccc" stroke-width=".9"/><rect x="7" y="14.5" width="9" height="6" fill="#eee"/><g opacity="1"><path d="M20.9 11.4 L23.1 12.6 L18.8 20.4 L16.6 19.2 Z" fill="#d0c0b8" stroke="#b4b4b0" stroke-width=".8" stroke-linejoin="round"/><path d="M22.0 12.0 L23.1 12.6 L18.8 20.4 L17.7 19.8 Z" fill="#cfcfcb"/><path d="M18.8 20.4 L16.6 19.2 L16.5 22.0 Z" fill="#eeeeea" stroke="#b4b4b0" stroke-width=".7" stroke-linejoin="round"/><path d="M18.1 20.4 L17.0 19.8 L16.5 22.0 Z" fill="#a8a8a4"/></g></g></g></svg>
<svg class="ic" style="left:315.0px;top:84.0px" width="24" height="24" viewBox="0 0 24 24"><g transform="translate(12 12) scale(1.05) translate(-12 -12)"><g opacity="0.82"><path d="M3 6 Q6 2 11 4 Q15 6 19 4 Q22.5 4 22 8 Q21.5 12 17 12 Q12 11 9 13.5 Q4 15 3 11 Z" fill="#d4d8d4" stroke="#c0c4c0" stroke-width="1"/><rect x="13.5" y="13.5" width="10.5" height="10.5" rx="1.7" fill="#d4d0c4"/><path d="M18.75 19.15 L17.86 22.53 L19.64 22.53 Z M18.40 18.95 L15.03 19.87 L15.92 21.41 Z M18.40 18.55 L15.92 16.09 L15.03 17.63 Z M18.75 18.35 L19.64 14.97 L17.86 14.97 Z M19.10 18.55 L22.47 17.63 L21.58 16.09 Z M19.10 18.95 L21.58 21.41 L22.47 19.87 Z " fill="#f8f8f8" stroke="#f8f8f8" stroke-width=".5" stroke-linejoin="round"/></g></g></svg>
<svg class="ic" style="left:346.0px;top:84.0px" width="24" height="24" viewBox="0 0 24 24"><g transform="translate(12 12) scale(1.05) translate(-12 -12)"><g opacity="0.82"><rect x="3.5" y="3" width="4.5" height="4.5" fill="#f4f4f4" stroke="#aaa" stroke-width=".9"/><circle cx="5.7" cy="5.2" r=".9" fill="#aaa"/><path d="M8 5 H18.5 M5 7.5 L2 20" stroke="#c8c8c8" stroke-width="1"/><path d="M9 21 L17 11" stroke="#d0d0c8" stroke-width="3"/><path d="M11 10.5 L19.5 20.5" stroke="#d4d4cc" stroke-width="3"/><path d="M10 9 L15 8 L17.5 11 L12.5 13 Z" fill="#d8d8d0"/></g></g></svg>
<svg class="ic" style="left:390.5px;top:84.0px" width="24" height="24" viewBox="0 0 24 24"><g transform="translate(12 12) scale(1.05) translate(-12 -12)"><g opacity="0.82"><rect x="3" y="3.5" width="18.5" height="4.5" fill="#dcdcd4" stroke="#ccc" stroke-width=".6"/><rect x="3" y="10" width="18.5" height="4.5" fill="#dcdcd4" stroke="#ccc" stroke-width=".6"/><rect x="3" y="16.5" width="18.5" height="4.5" fill="#dcdcd4" stroke="#ccc" stroke-width=".6"/><g opacity="1"><path d="M19.6 1.3 L22.4 2.7 L15.4 16.8 L12.5 15.3 Z" fill="#e4e0dc" stroke="#b4b4b0" stroke-width=".8" stroke-linejoin="round"/><path d="M21.0 2.0 L22.4 2.7 L15.4 16.8 L14.0 16.0 Z" fill="#cfcfcb"/><path d="M15.4 16.8 L12.5 15.3 L12.0 20.0 Z" fill="#eeeeea" stroke="#b4b4b0" stroke-width=".7" stroke-linejoin="round"/><path d="M13.5 18.3 L12.4 17.8 L12.0 20.0 Z" fill="#a8a8a4"/></g><path d="M10.5 19.5 L9.5 23 L13 21Z" fill="#ccc"/></g></g></svg>
<svg class="ic" style="left:421.0px;top:84.0px" width="24" height="24" viewBox="0 0 24 24"><g transform="translate(12 12) scale(1.05) translate(-12 -12)"><g opacity="0.78"><path d="M3.5 8.5 H20.5 L19.5 22 H4.5 Z" fill="#e2dcdc" stroke="#ccc0c0" stroke-width="1.2"/><path d="M2.5 5.5 H21.5 V8.5 H2.5 Z M7 3 H17 V5.5 H7Z" fill="#dfd9d9" stroke="#ccc0c0" stroke-width="1"/><path d="M8 10 V21 M12 10 V21 M16 10 V21 M4 15 H20" stroke="#c8b4b4" stroke-width="1.2"/></g></g></svg>
<svg class="ic" style="left:452.0px;top:84.0px" width="24" height="24" viewBox="0 0 24 24"><g transform="translate(12 12) scale(1.05) translate(-12 -12)"><g opacity="0.82"><path d="M2.5 6 L16 15.5 M2.5 12.5 L16 8" stroke="#c8c8c8" stroke-width="1.6"/><ellipse cx="19" cy="7" rx="3" ry="2.3" fill="none" stroke="#d0b8b8" stroke-width="1.4" transform="rotate(-25 19 7)"/><ellipse cx="19" cy="17" rx="3" ry="2.3" fill="none" stroke="#d0b8b8" stroke-width="1.4" transform="rotate(25 19 17)"/></g></g></svg>
<svg class="ic" style="left:482.5px;top:84.0px" width="24" height="24" viewBox="0 0 24 24"><g transform="translate(12 12) scale(1.05) translate(-12 -12)"><g opacity="0.88"><path d="M10 2.5 H16 L19.5 6 V16 H10Z" fill="#f4f4f4" stroke="#c8c8c8" stroke-width=".9"/><path d="M5.5 7.5 H12.5 L16 11 V22 H5.5Z" fill="#f6f6f6" stroke="#bbb" stroke-width=".9"/><path d="M12.5 7.5 V11 H16" fill="none" stroke="#bbb" stroke-width=".9"/><path d="M7.5 13.5 H14 M7.5 15.5 H14 M7.5 17.5 H14 M7.5 19.5 H14" stroke="#ccc" stroke-width=".8"/></g></g></svg>
<svg class="ic" style="left:513.5px;top:84.0px" width="24" height="24" viewBox="0 0 24 24"><g transform="translate(12 12) scale(1.05) translate(-12 -12)"><g opacity="0.88"><rect x="4.5" y="3.5" width="15" height="18.5" rx="1" fill="#e8e8e4" stroke="#c4c4bc" stroke-width="1"/><rect x="8" y="2" width="8" height="3.5" fill="#dcdcdc" stroke="#c4c4c4" stroke-width=".8"/><path d="M6.5 7 H14.5 L17.5 10 V20 H6.5Z" fill="#f8f8f8" stroke="#c4c4c4" stroke-width=".8"/><path d="M8.5 12 H15.5 M8.5 14 H15.5 M8.5 16 H15.5 M8.5 18 H15.5" stroke="#ccc" stroke-width=".8"/></g></g></svg>
<svg class="ic" style="left:544.5px;top:84.0px" width="24" height="24" viewBox="0 0 24 24"><g transform="translate(12 12) scale(1.05) translate(-12 -12)"><g opacity="0.88"><path d="M2.5 9 L10 2.5 V6.5 Q19.5 6.5 19.5 14 Q19.5 20 12.5 21 Q16 18.5 14.5 15 Q13 12 10 12 V16 Z" fill="#d8d2ce" stroke="#ccc6c2" stroke-width=".8"/></g></g></svg>
<svg class="ic" style="left:576.0px;top:84.0px" width="24" height="24" viewBox="0 0 24 24"><g transform="translate(12 12) scale(1.05) translate(-12 -12)"><g opacity="0.88"><path d="M21.5 9 L14 2.5 V6.5 Q4.5 6.5 4.5 14 Q4.5 20 11.5 21 Q8 18.5 9.5 15 Q11 12 14 12 V16 Z" fill="#d4d8d4" stroke="#c8ccc8" stroke-width=".8"/></g></g></svg>
<svg class="ic" style="left:376.5px;top:93.0px" width="7" height="4" viewBox="0 0 7 4"><path d="M0 0 H7 L3.5 4 Z" fill="#666"/></svg>
<div class="a" style="left:605px;top:80px;width:1px;height:32px;background:#a8a8a8"></div><div class="a" style="left:606px;top:80px;width:1px;height:32px;background:#fff"></div>
<svg class="ic" style="left:609.5px;top:83px" width="4" height="30"><rect x="0" y="0" width="2.6" height="2.6" fill="#fdfdfd"/><rect x=".7" y="0.7" width="2" height="2" fill="#b4b4b4"/><rect x="0" y="4" width="2.6" height="2.6" fill="#fdfdfd"/><rect x=".7" y="4.7" width="2" height="2" fill="#b4b4b4"/><rect x="0" y="8" width="2.6" height="2.6" fill="#fdfdfd"/><rect x=".7" y="8.7" width="2" height="2" fill="#b4b4b4"/><rect x="0" y="12" width="2.6" height="2.6" fill="#fdfdfd"/><rect x=".7" y="12.7" width="2" height="2" fill="#b4b4b4"/><rect x="0" y="16" width="2.6" height="2.6" fill="#fdfdfd"/><rect x=".7" y="16.7" width="2" height="2" fill="#b4b4b4"/><rect x="0" y="20" width="2.6" height="2.6" fill="#fdfdfd"/><rect x=".7" y="20.7" width="2" height="2" fill="#b4b4b4"/><rect x="0" y="24" width="2.6" height="2.6" fill="#fdfdfd"/><rect x=".7" y="24.7" width="2" height="2" fill="#b4b4b4"/></svg>
<svg class="ic" style="left:617.0px;top:84.0px" width="24" height="24" viewBox="0 0 24 24"><g transform="translate(12 12) scale(1.05) translate(-12 -12)"><g opacity="0.92" transform="translate(0 0)"><path d="M2.6 9.4 L6.4 4.8 H22.2 V14.1 H6.4 Z" fill="#e6e6e0" stroke="#c4c4bc" stroke-width="1" stroke-linejoin="round"/><text x="14.1" y="12.3" font-family="Liberation Sans,sans-serif" font-weight="bold" font-size="9.2" text-anchor="middle" fill="#b8b8b0">abc</text></g></g></svg>
<svg class="ic" style="left:650.0px;top:84.0px" width="24" height="24" viewBox="0 0 24 24"><g transform="translate(12 12) scale(1.05) translate(-12 -12)"><g opacity="0.95"><circle cx="9" cy="8.5" r="7" fill="#c4d0c4"/><path d="M9 8.5 L9 1.5 A7 7 0 0 1 15.5 11 Z" fill="#d4c0c0"/><path d="M9 8.5 L15.5 11 A7 7 0 0 1 4 13.5 Z" fill="#d0d0bc"/><path d="M9 8.5 L9 1.5 M9 8.5 L15.5 11 M9 8.5 L4 13.5" stroke="#b4b8b0" stroke-width=".6"/><rect x="9.5" y="15" width="4.2" height="8" fill="#d0d0bc" stroke="#c0c0b0" stroke-width=".5"/><rect x="13.7" y="10" width="4.2" height="13" fill="#c0d0c8" stroke="#b0c0b8" stroke-width=".5"/><rect x="17.9" y="17" width="4.2" height="6" fill="#d4c0c4" stroke="#c4b0b4" stroke-width=".5"/></g></g></svg>
<svg class="ic" style="left:685.0px;top:84.0px" width="24" height="24" viewBox="0 0 24 24"><g transform="translate(12 12) scale(1.05) translate(-12 -12)"><path d="M2.6 9.4 L6.4 4.8 H22.2 V14.1 H6.4 Z" fill="#c8dcf4" stroke="#4a90e8" stroke-width="1.2" stroke-linejoin="round"/><text x="11.6" y="12.3" font-family="Liberation Sans,sans-serif" font-weight="bold" font-size="9.5" text-anchor="middle" fill="#111">ab</text><path d="M18 8.5 L19.6 15" stroke="#f4f4f4" stroke-width="1.8" stroke-linecap="round"/><path d="M17.4 8.8 L18.8 14" stroke="#888" stroke-width=".5"/><circle cx="20" cy="18" r="4.6" fill="#a82020"/><circle cx="18.8" cy="16.6" r="1.4" fill="#e06868"/></g></svg>
<svg class="ic" style="left:715.5px;top:84.0px" width="24" height="24" viewBox="0 0 24 24"><g transform="translate(12 12) scale(1.05) translate(-12 -12)"><path d="M2.6 9.4 L6.4 4.8 H22.2 V14.1 H6.4 Z" fill="#fff" stroke="#ee1111" stroke-width="1.3" stroke-linejoin="round"/><text x="14.1" y="12.3" font-family="Liberation Sans,sans-serif" font-weight="bold" font-size="9.2" text-anchor="middle" fill="#ee1111">abc</text></g></svg>
<svg class="ic" style="left:753.5px;top:84.0px" width="24" height="24" viewBox="0 0 24 24"><g transform="translate(12 12) scale(1.05) translate(-12 -12)"><g opacity="0.88"><path d="M2.6 9.4 L6.4 4.8 H22.2 V14.1 H6.4 Z" fill="#e6e6e0" stroke="#c4c4bc" stroke-width="1" stroke-linejoin="round"/><text x="11.6" y="12.3" font-family="Liberation Sans,sans-serif" font-weight="bold" font-size="9.2" text-anchor="middle" fill="#b8b8b0">ab</text><circle cx="20" cy="18" r="4.6" fill="#d0c4c4"/><path d="M18 8.5 L19.6 15" stroke="#f4f4f4" stroke-width="1.8"/></g></g></svg>
<svg class="ic" style="left:784.0px;top:84.0px" width="24" height="24" viewBox="0 0 24 24"><g transform="translate(12 12) scale(1.05) translate(-12 -12)"><g opacity="0.88"><path d="M2.6 9.4 L6.4 4.8 H22.2 V14.1 H6.4 Z" fill="#e6e6e0" stroke="#c4c4bc" stroke-width="1" stroke-linejoin="round"/><text x="14.1" y="12.3" font-family="Liberation Sans,sans-serif" font-weight="bold" font-size="9.2" text-anchor="middle" fill="#b8b8b0">abc</text><path d="M9 19.5 Q15.5 13.5 22.5 19.5 Q15.5 24.5 9 19.5Z" fill="#f4f4f4" stroke="#bbb" stroke-width=".8"/><circle cx="15.7" cy="19.4" r="2.4" fill="#bbb"/></g></g></svg>
<svg class="ic" style="left:815.0px;top:84.0px" width="24" height="24" viewBox="0 0 24 24"><g transform="translate(12 12) scale(1.05) translate(-12 -12)"><g opacity="0.88"><path d="M2.6 9.4 L6.4 4.8 H22.2 V14.1 H6.4 Z" fill="#e6e6e0" stroke="#c4c4bc" stroke-width="1" stroke-linejoin="round"/><text x="14.1" y="12.3" font-family="Liberation Sans,sans-serif" font-weight="bold" font-size="9.2" text-anchor="middle" fill="#b8b8b0">abc</text><rect x="14" y="13.5" width="9.8" height="9.8" rx="1.5" fill="#c8c8c8"/><path d="M15.5 17.2 H19 V15.2 L22.8 18.4 L19 21.6 V19.6 H15.5Z" fill="#fafafa"/></g></g></svg>
<svg class="ic" style="left:846.0px;top:84.0px" width="24" height="24" viewBox="0 0 24 24"><g transform="translate(12 12) scale(1.05) translate(-12 -12)"><g opacity="0.88"><path d="M2.6 9.4 L6.4 4.8 H22.2 V14.1 H6.4 Z" fill="#e6e6e0" stroke="#c4c4bc" stroke-width="1" stroke-linejoin="round"/><text x="14.1" y="12.3" font-family="Liberation Sans,sans-serif" font-weight="bold" font-size="9.2" text-anchor="middle" fill="#b8b8b0">abc</text><rect x="14" y="13.5" width="9.8" height="9.8" rx="1.5" fill="#c8c8c8"/><path d="M16.6 18.8 A2.7 2.7 0 1 1 19.2 21.3" stroke="#fafafa" stroke-width="1.6" fill="none"/><path d="M15 17.2 L16.6 20.2 L18.6 17.6Z" fill="#fafafa"/></g></g></svg>
<svg class="ic" style="left:877.0px;top:84.0px" width="24" height="24" viewBox="0 0 24 24"><g transform="translate(12 12) scale(1.05) translate(-12 -12)"><g opacity="0.88"><path d="M2.6 9.4 L6.4 4.8 H22.2 V14.1 H6.4 Z" fill="#e6e6e0" stroke="#c4c4bc" stroke-width="1" stroke-linejoin="round"/><text x="14.1" y="12.3" font-family="Liberation Sans,sans-serif" font-weight="bold" font-size="9.2" text-anchor="middle" fill="#b8b8b0">abc</text><rect x="14" y="13.5" width="9.8" height="9.8" rx="1.5" fill="#d4d4cc"/><path d="M16 21.5 L21.8 15.5" stroke="#fafafa" stroke-width="2.2"/></g></g></svg>
<div class="a" style="left:680px;top:84px;width:1px;height:24px;background:#c4c4c4"></div>
<div class="a" style="left:748px;top:84px;width:1px;height:24px;background:#c4c4c4"></div>
<div class="a" style="left:908px;top:80px;width:1px;height:32px;background:#a8a8a8"></div><div class="a" style="left:909px;top:80px;width:1px;height:32px;background:#fff"></div>
<svg class="ic" style="left:912.5px;top:83px" width="4" height="30"><rect x="0" y="0" width="2.6" height="2.6" fill="#fdfdfd"/><rect x=".7" y="0.7" width="2" height="2" fill="#b4b4b4"/><rect x="0" y="4" width="2.6" height="2.6" fill="#fdfdfd"/><rect x=".7" y="4.7" width="2" height="2" fill="#b4b4b4"/><rect x="0" y="8" width="2.6" height="2.6" fill="#fdfdfd"/><rect x=".7" y="8.7" width="2" height="2" fill="#b4b4b4"/><rect x="0" y="12" width="2.6" height="2.6" fill="#fdfdfd"/><rect x=".7" y="12.7" width="2" height="2" fill="#b4b4b4"/><rect x="0" y="16" width="2.6" height="2.6" fill="#fdfdfd"/><rect x=".7" y="16.7" width="2" height="2" fill="#b4b4b4"/><rect x="0" y="20" width="2.6" height="2.6" fill="#fdfdfd"/><rect x=".7" y="20.7" width="2" height="2" fill="#b4b4b4"/><rect x="0" y="24" width="2.6" height="2.6" fill="#fdfdfd"/><rect x=".7" y="24.7" width="2" height="2" fill="#b4b4b4"/></svg>
<svg class="ic" style="left:922.0px;top:84.0px" width="24" height="24" viewBox="0 0 24 24"><g transform="translate(12 12) scale(1.05) translate(-12 -12)"><ellipse cx="12" cy="11" rx="10.5" ry="9.5" fill="#6f9fd8" stroke="#3465a4" stroke-width="1"/><ellipse cx="12" cy="11" rx="5" ry="9.5" fill="#cfe0f4" stroke="#3465a4" stroke-width=".8"/><path d="M3.5 7 Q5.5 3 9.5 3.5 L10.5 6.5 L8.5 8.5 L9 12.5 L7 17 L5 12 Z M14 3 Q19 4 20.5 9 L19.5 14 L17 18 L15 13 L16.5 9 Z" fill="#1f3050" opacity=".8"/><path d="M1.5 11 H22.5 M3 6.5 H21 M3 15.5 H21 M12 1.5 V20.5" stroke="#3465a4" stroke-width=".9" fill="none"/><path d="M5.5 15 L8 13.5 H10.5 L12 15 L13.5 13.5 H16 L18.5 15 L20 21 Q20 23.5 17 23.5 Q14.5 23.5 14 21 H10 Q9.5 23.5 7 23.5 Q4 23.5 4 21 Z" fill="#000"/><ellipse cx="7" cy="21.3" rx="2.3" ry="1.4" fill="#fff"/><ellipse cx="17" cy="21.3" rx="2.3" ry="1.4" fill="#fff"/></g></svg>
<svg class="ic" style="left:953.0px;top:84.0px" width="24" height="24" viewBox="0 0 24 24"><g transform="translate(12 12) scale(1.05) translate(-12 -12)"><ellipse cx="11.5" cy="11" rx="10.5" ry="9.5" fill="#5a9ae8" stroke="#3465a4" stroke-width="1"/><ellipse cx="6" cy="11" rx="3.5" ry="8" fill="#555" opacity=".85"/><ellipse cx="17" cy="11" rx="3.5" ry="8" fill="#555" opacity=".85"/><ellipse cx="11.5" cy="11" rx="3" ry="9.3" fill="#9cc4f8"/><path d="M1.5 11 H21.5 M3 6.5 H20 M3 15.5 H20" stroke="#a8ccf8" stroke-width="1" fill="none"/><rect x="14.5" y="14.5" width="9" height="9" rx="1" fill="#4a9048" stroke="#3a7838" stroke-width=".6"/><path d="M16 19 H22 M19 16 V22" stroke="#fff" stroke-width="1.8"/><path d="M18.5 20.5 H22.5 L20.5 22.8Z" fill="#000"/></g></svg>
<svg class="ic" style="left:984.0px;top:84.0px" width="24" height="24" viewBox="0 0 24 24"><g transform="translate(12 12) scale(1.05) translate(-12 -12)"><ellipse cx="11.5" cy="11" rx="10.5" ry="9.5" fill="#5a9ae8" stroke="#3465a4" stroke-width="1"/><ellipse cx="6" cy="11" rx="3.5" ry="8" fill="#555" opacity=".85"/><ellipse cx="17" cy="11" rx="3.5" ry="8" fill="#555" opacity=".85"/><ellipse cx="11.5" cy="11" rx="3" ry="9.3" fill="#9cc4f8"/><path d="M1.5 11 H21.5 M3 6.5 H20 M3 15.5 H20" stroke="#a8ccf8" stroke-width="1" fill="none"/><rect x="14.5" y="14.5" width="9" height="9" rx="1" fill="#4a9048" stroke="#3a7838" stroke-width=".6"/><circle cx="18.3" cy="18.2" r="2.1" fill="none" stroke="#fff" stroke-width="1.2"/><path d="M19.8 19.8 L22.3 22.3" stroke="#fff" stroke-width="1.4"/></g></svg>
<div class="a" style="left:1013px;top:80px;width:1px;height:32px;background:#a8a8a8"></div><div class="a" style="left:1014px;top:80px;width:1px;height:32px;background:#fff"></div>
<svg class="ic" style="left:1017.5px;top:83px" width="4" height="30"><rect x="0" y="0" width="2.6" height="2.6" fill="#fdfdfd"/><rect x=".7" y="0.7" width="2" height="2" fill="#b4b4b4"/><rect x="0" y="4" width="2.6" height="2.6" fill="#fdfdfd"/><rect x=".7" y="4.7" width="2" height="2" fill="#b4b4b4"/><rect x="0" y="8" width="2.6" height="2.6" fill="#fdfdfd"/><rect x=".7" y="8.7" width="2" height="2" fill="#b4b4b4"/><rect x="0" y="12" width="2.6" height="2.6" fill="#fdfdfd"/><rect x=".7" y="12.7" width="2" height="2" fill="#b4b4b4"/><rect x="0" y="16" width="2.6" height="2.6" fill="#fdfdfd"/><rect x=".7" y="16.7" width="2" height="2" fill="#b4b4b4"/><rect x="0" y="20" width="2.6" height="2.6" fill="#fdfdfd"/><rect x=".7" y="20.7" width="2" height="2" fill="#b4b4b4"/><rect x="0" y="24" width="2.6" height="2.6" fill="#fdfdfd"/><rect x=".7" y="24.7" width="2" height="2" fill="#b4b4b4"/></svg>
<svg class="ic" style="left:1027.0px;top:84.0px" width="24" height="24" viewBox="0 0 24 24"><g transform="translate(12 12) scale(1.05) translate(-12 -12)"><path d="M11.5 2 Q6.5 2 6.5 5 V8 H12 V9 H4.5 Q2 9 2 13 Q2 17 5 17 H7 V14 Q7 11.5 9.5 11.5 H14 Q16.5 11.5 16.5 9 V5 Q16.5 2 11.5 2 Z" fill="#3876b0"/><circle cx="8.8" cy="4.8" r="1" fill="#fff"/><path d="M12.5 22 Q17.5 22 17.5 19 V16 H12 V15 H19.5 Q22 15 22 11.5 Q22 8 19 8 H17.5 V10.5 Q17.5 12.8 15 12.8 H10 Q7.5 12.8 7.5 15.5 V19 Q7.5 22 12.5 22 Z" fill="#fcd43c"/><circle cx="15.2" cy="19.2" r="1" fill="#fff"/><text x="19.5" y="23.5" font-family="Liberation Sans,sans-serif" font-size="9" text-anchor="middle" fill="#222">&gt;</text></g></svg>
<svg class="ic" style="left:1057.0px;top:84.0px" width="24" height="24" viewBox="0 0 24 24"><g transform="translate(12 12) scale(1.05) translate(-12 -12)"><path d="M4.5 9.5 L1.5 12 L7 16 L9.5 10.5 L7.3 10.8 Q9 6 14 6.5 Q18.5 7.5 18.5 12.5 Q18.3 17 14 18.5 L15 22.5 Q22.5 20.5 22.8 12.5 Q22.5 4 14.5 2.5 Q6.5 2 4.5 9.5Z" fill="#3a8ae8" stroke="#2a6ac8" stroke-width=".5"/></g></svg>
<svg class="ic" style="left:1087.5px;top:94.0px" width="7" height="4" viewBox="0 0 7 4"><path d="M0 0 H7 L3.5 4 Z" fill="#222"/></svg>
<div class="a" style="left:1099px;top:80px;width:1px;height:32px;background:#a8a8a8"></div><div class="a" style="left:1100px;top:80px;width:1px;height:32px;background:#fff"></div>
<svg class="ic" style="left:1103.5px;top:83px" width="4" height="30"><rect x="0" y="0" width="2.6" height="2.6" fill="#fdfdfd"/><rect x=".7" y="0.7" width="2" height="2" fill="#b4b4b4"/><rect x="0" y="4" width="2.6" height="2.6" fill="#fdfdfd"/><rect x=".7" y="4.7" width="2" height="2" fill="#b4b4b4"/><rect x="0" y="8" width="2.6" height="2.6" fill="#fdfdfd"/><rect x=".7" y="8.7" width="2" height="2" fill="#b4b4b4"/><rect x="0" y="12" width="2.6" height="2.6" fill="#fdfdfd"/><rect x=".7" y="12.7" width="2" height="2" fill="#b4b4b4"/><rect x="0" y="16" width="2.6" height="2.6" fill="#fdfdfd"/><rect x=".7" y="16.7" width="2" height="2" fill="#b4b4b4"/><rect x="0" y="20" width="2.6" height="2.6" fill="#fdfdfd"/><rect x=".7" y="20.7" width="2" height="2" fill="#b4b4b4"/><rect x="0" y="24" width="2.6" height="2.6" fill="#fdfdfd"/><rect x=".7" y="24.7" width="2" height="2" fill="#b4b4b4"/></svg>
<svg class="ic" style="left:1113.0px;top:84.0px" width="24" height="24" viewBox="0 0 24 24"><g transform="translate(12 12) scale(1.05) translate(-12 -12)"><rect x="3.5" y="2.5" width="18" height="19" fill="#6d97c4" stroke="#1a2a3a" stroke-width="1"/><rect x="3.5" y="2.5" width="4.5" height="19" fill="#2e4358" stroke="#1a2a3a" stroke-width="1"/><text x="14.8" y="17" font-family="Liberation Sans,sans-serif" font-size="13" text-anchor="middle" fill="#fff">?</text></g></svg>
<div class="a" style="left:1142px;top:80px;width:1px;height:32px;background:#a8a8a8"></div><div class="a" style="left:1143px;top:80px;width:1px;height:32px;background:#fff"></div>
<svg class="ic" style="left:1146.5px;top:83px" width="4" height="30"><rect x="0" y="0" width="2.6" height="2.6" fill="#fdfdfd"/><rect x=".7" y="0.7" width="2" height="2" fill="#b4b4b4"/><rect x="0" y="4" width="2.6" height="2.6" fill="#fdfdfd"/><rect x=".7" y="4.7" width="2" height="2" fill="#b4b4b4"/><rect x="0" y="8" width="2.6" height="2.6" fill="#fdfdfd"/><rect x=".7" y="8.7" width="2" height="2" fill="#b4b4b4"/><rect x="0" y="12" width="2.6" height="2.6" fill="#fdfdfd"/><rect x=".7" y="12.7" width="2" height="2" fill="#b4b4b4"/><rect x="0" y="16" width="2.6" height="2.6" fill="#fdfdfd"/><rect x=".7" y="16.7" width="2" height="2" fill="#b4b4b4"/><rect x="0" y="20" width="2.6" height="2.6" fill="#fdfdfd"/><rect x=".7" y="20.7" width="2" height="2" fill="#b4b4b4"/><rect x="0" y="24" width="2.6" height="2.6" fill="#fdfdfd"/><rect x=".7" y="24.7" width="2" height="2" fill="#b4b4b4"/></svg>
<svg class="ic" style="left:1155.0px;top:84.0px" width="24" height="24" viewBox="0 0 24 24"><g transform="translate(12 12) scale(1.05) translate(-12 -12)"><path d="M2.5 2.5 L4 9 M7.5 8.5 L12 5 M15.5 4.5 H20 M2.5 14 L4 20.5 L7.5 20.5 L12 16.5 M15.5 16.5 H20" stroke="#111" stroke-width="1.2" fill="none"/><circle cx="2.5" cy="2.5" r="1.3" fill="#111"/><circle cx="4" cy="9" r="1.3" fill="#111"/><circle cx="7.5" cy="8.5" r="1.3" fill="#111"/><circle cx="12" cy="5" r="1.3" fill="#111"/><circle cx="15.5" cy="4.5" r="1.3" fill="#111"/><circle cx="20" cy="4.5" r="1.3" fill="#111"/><circle cx="2.5" cy="14" r="1.3" fill="#111"/><circle cx="4" cy="20.5" r="1.3" fill="#111"/><circle cx="7.5" cy="20.5" r="1.3" fill="#111"/><circle cx="12" cy="16.5" r="1.3" fill="#111"/><circle cx="15.5" cy="16.5" r="1.3" fill="#111"/><circle cx="20" cy="16.5" r="1.3" fill="#111"/><path d="M11 8.5 Q13.5 10.5 12.5 14 L14.5 12 M12.5 14 L10.8 12.3" stroke="#f4b830" stroke-width="1.4" fill="none"/></g></svg>
<svg class="ic" style="left:1187.5px;top:84.0px" width="24" height="24" viewBox="0 0 24 24"><g transform="translate(12 12) scale(1.05) translate(-12 -12)"><rect x="1.5" y="1.5" width="21" height="21" rx="3" fill="#f4d848"/><text x="2.5" y="11" font-family="Liberation Sans,sans-serif" font-weight="bold" font-size="12.5" fill="#f00" textLength="19" lengthAdjust="spacingAndGlyphs">NN</text><text x="2" y="21" font-family="Liberation Sans,sans-serif" font-weight="bold" font-size="11" fill="#f00" textLength="20.5" lengthAdjust="spacingAndGlyphs">Join</text></g></svg>
<svg class="ic" style="left:3.5px;top:117px" width="4" height="30"><rect x="0" y="0" width="2.6" height="2.6" fill="#fdfdfd"/><rect x=".7" y="0.7" width="2" height="2" fill="#b4b4b4"/><rect x="0" y="4" width="2.6" height="2.6" fill="#fdfdfd"/><rect x=".7" y="4.7" width="2" height="2" fill="#b4b4b4"/><rect x="0" y="8" width="2.6" height="2.6" fill="#fdfdfd"/><rect x=".7" y="8.7" width="2" height="2" fill="#b4b4b4"/><rect x="0" y="12" width="2.6" height="2.6" fill="#fdfdfd"/><rect x=".7" y="12.7" width="2" height="2" fill="#b4b4b4"/><rect x="0" y="16" width="2.6" height="2.6" fill="#fdfdfd"/><rect x=".7" y="16.7" width="2" height="2" fill="#b4b4b4"/><rect x="0" y="20" width="2.6" height="2.6" fill="#fdfdfd"/><rect x=".7" y="20.7" width="2" height="2" fill="#b4b4b4"/><rect x="0" y="24" width="2.6" height="2.6" fill="#fdfdfd"/><rect x=".7" y="24.7" width="2" height="2" fill="#b4b4b4"/></svg>
<svg class="ic" style="left:13.0px;top:118.6px" width="24" height="24" viewBox="0 0 24 24"><g transform="translate(12 12) scale(1.05) translate(-12 -12)"><g opacity="0.92"><rect x="1.5" y="1.5" width="20" height="18" fill="none" stroke="#aaa" stroke-width=".8" stroke-dasharray="1.5 1.5"/><rect x="2.5" y="2.5" width="13" height="13" fill="#dcdcd4"/><path d="M9 8 L21.5 14.5 L16.8 15.8 L20.5 21.5 L18 23 L14.6 17.2 L11.5 20.5 Z" fill="#f4f4f4" stroke="#bbb" stroke-width=".9"/></g></g></svg>
<svg class="ic" style="left:56.5px;top:118.6px" width="24" height="24" viewBox="0 0 24 24"><g transform="translate(12 12) scale(1.05) translate(-12 -12)"><g opacity="0.92"><rect x="2.5" y="3" width="19" height="4.6" fill="#dcdcd4" stroke="#ccc" stroke-width=".6"/><rect x="2.5" y="9.7" width="19" height="4.6" fill="#dcdcd4" stroke="#ccc" stroke-width=".6"/><rect x="2.5" y="16.4" width="19" height="4.6" fill="#dcdcd4" stroke="#ccc" stroke-width=".6"/></g></g></svg>
<svg class="ic" style="left:100.0px;top:118.6px" width="24" height="24" viewBox="0 0 24 24"><g transform="translate(12 12) scale(1.05) translate(-12 -12)"><rect x="2.5" y="2.5" width="12" height="12" fill="#fce94f" stroke="#c4a000" stroke-width="1"/><rect x="6.5" y="6.5" width="12" height="12" fill="#fce94f" stroke="#c4a000" stroke-width="1"/><rect x="13.5" y="13.5" width="10" height="10" rx="2" fill="#d81828"/><circle cx="18.5" cy="18.5" r="3" fill="none" stroke="#fff" stroke-width="1.2"/><path d="M16.4 20.6 L20.6 16.4" stroke="#fff" stroke-width="1.2"/></g></svg>
<svg class="ic" style="left:142.5px;top:118.6px" width="24" height="24" viewBox="0 0 24 24"><g transform="translate(12 12) scale(1.05) translate(-12 -12)"><rect x="2.5" y="2.5" width="14" height="14" fill="#fce94f" stroke="#c4a000" stroke-width="1"/><path d="M19 13 Q22 13 22 16 Q22 18 19 22.5 Q16 18 16 16 Q16 13 19 13Z" fill="#5b8cc0" stroke="#3a6aa8" stroke-width=".6"/><circle cx="19" cy="16" r="1.2" fill="#fff"/></g></svg>
<svg class="ic" style="left:42.5px;top:128.0px" width="7" height="4" viewBox="0 0 7 4"><path d="M0 0 H7 L3.5 4 Z" fill="#555"/></svg>
<svg class="ic" style="left:85.5px;top:128.0px" width="7" height="4" viewBox="0 0 7 4"><path d="M0 0 H7 L3.5 4 Z" fill="#555"/></svg>
<svg class="ic" style="left:129.0px;top:128.0px" width="7" height="4" viewBox="0 0 7 4"><path d="M0 0 H7 L3.5 4 Z" fill="#222"/></svg>
<svg class="ic" style="left:4px;top:150.0px" width="43" height="4"><rect x="0" y="0" width="2.6" height="2.6" fill="#fdfdfd"/><rect x="0.7" y=".7" width="2" height="2" fill="#b4b4b4"/><rect x="4" y="0" width="2.6" height="2.6" fill="#fdfdfd"/><rect x="4.7" y=".7" width="2" height="2" fill="#b4b4b4"/><rect x="8" y="0" width="2.6" height="2.6" fill="#fdfdfd"/><rect x="8.7" y=".7" width="2" height="2" fill="#b4b4b4"/><rect x="12" y="0" width="2.6" height="2.6" fill="#fdfdfd"/><rect x="12.7" y=".7" width="2" height="2" fill="#b4b4b4"/><rect x="16" y="0" width="2.6" height="2.6" fill="#fdfdfd"/><rect x="16.7" y=".7" width="2" height="2" fill="#b4b4b4"/><rect x="20" y="0" width="2.6" height="2.6" fill="#fdfdfd"/><rect x="20.7" y=".7" width="2" height="2" fill="#b4b4b4"/><rect x="24" y="0" width="2.6" height="2.6" fill="#fdfdfd"/><rect x="24.7" y=".7" width="2" height="2" fill="#b4b4b4"/><rect x="28" y="0" width="2.6" height="2.6" fill="#fdfdfd"/><rect x="28.7" y=".7" width="2" height="2" fill="#b4b4b4"/><rect x="32" y="0" width="2.6" height="2.6" fill="#fdfdfd"/><rect x="32.7" y=".7" width="2" height="2" fill="#b4b4b4"/><rect x="36" y="0" width="2.6" height="2.6" fill="#fdfdfd"/><rect x="36.7" y=".7" width="2" height="2" fill="#b4b4b4"/></svg>
<svg class="ic" style="left:5.0px;top:160.0px" width="24" height="24" viewBox="0 0 24 24"><g transform="translate(12 12) scale(1.05) translate(-12 -12)"><path d="M2.5 3 L9 18.5 L15.5 3.5 Q18.5 2.2 21.5 3" stroke="#2e3f52" stroke-width="1.3" fill="none"/><path d="M0.6000000000000001 3 L2.5 1.1 L4.4 3 L2.5 4.9 Z" fill="#fff" stroke="#2e3f52" stroke-width=".9"/><path d="M13.6 3.2 L15.5 1.3000000000000003 L17.4 3.2 L15.5 5.1 Z" fill="#fff" stroke="#2e3f52" stroke-width=".9"/><path d="M19.6 3 L21.5 1.1 L23.4 3 L21.5 4.9 Z" fill="#fff" stroke="#2e3f52" stroke-width=".9"/><circle cx="9" cy="18.5" r="1.7" fill="#fff" stroke="#2e3f52" stroke-width="1"/><rect x="14.6" y="14.8" width="8.4" height="8.4" rx="1.8" fill="#5a9a55" stroke="#4a8045" stroke-width=".6"/><path d="M16.112000000000002 19.0 H21.488 M18.8 16.312 V21.688" stroke="#fff" stroke-width="1.8"/></g></svg>
<svg class="ic" style="left:5.0px;top:190.0px" width="24" height="24" viewBox="0 0 24 24"><g transform="translate(12 12) scale(1.05) translate(-12 -12)"><rect x="0.50" y="0.80" width="6.45" height="6.45" fill="#1f3f66"/><rect x="6.90" y="0.80" width="6.45" height="6.45" fill="#6d9cd0"/><rect x="13.30" y="0.80" width="6.45" height="6.45" fill="#1f3f66"/><rect x="0.50" y="7.20" width="6.45" height="6.45" fill="#6d9cd0"/><rect x="6.90" y="7.20" width="6.45" height="6.45" fill="#1f3f66"/><rect x="13.30" y="7.20" width="6.45" height="6.45" fill="#6d9cd0"/><rect x="0.50" y="13.60" width="6.45" height="6.45" fill="#1f3f66"/><rect x="6.90" y="13.60" width="6.45" height="6.45" fill="#6d9cd0"/><rect x="14.6" y="14.8" width="8.4" height="8.4" rx="1.8" fill="#5a9a55" stroke="#4a8045" stroke-width=".6"/><path d="M16.112000000000002 19.0 H21.488 M18.8 16.312 V21.688" stroke="#fff" stroke-width="1.8"/></g></svg>
<svg class="ic" style="left:5.0px;top:220.0px" width="24" height="24" viewBox="0 0 24 24"><g transform="translate(12 12) scale(1.05) translate(-12 -12)"><rect x="2.5" y="2.5" width="20" height="20" rx="1" fill="#7ca4d4" stroke="#1f3f66" stroke-width="1.2"/><path d="M2.5 14.5 H22.5 M13.5 2.5 V22.5 M2.5 2.5 L13.5 14.5 M13.5 2.5 L2.5 14.5 M22.5 2.5 L13.5 14.5 M8 14.5 V22.5 M2.5 18.5 H13.5" stroke="#1f3f66" stroke-width=".9" fill="none"/><rect x="14.6" y="14.8" width="8.4" height="8.4" rx="1.8" fill="#5a9a55" stroke="#4a8045" stroke-width=".6"/><path d="M16.112000000000002 19.0 H21.488 M18.8 16.312 V21.688" stroke="#fff" stroke-width="1.8"/></g></svg>
<svg class="ic" style="left:5.0px;top:250.0px" width="24" height="24" viewBox="0 0 24 24"><g transform="translate(12 12) scale(1.05) translate(-12 -12)"><path d="M8 3.5 Q12 1.5 14.5 5 Q16.5 9 13 13.5 Q10.5 16.5 6.5 18 L6 16.5 Q10 14 10.5 10.5 Q7.5 11 6.5 8 Q6 5 8 3.5Z" fill="#4a78b0" stroke="#2e5a94" stroke-width=".6"/><rect x="14.6" y="14.8" width="8.4" height="8.4" rx="1.8" fill="#5a9a55" stroke="#4a8045" stroke-width=".6"/><path d="M16.112000000000002 19.0 H21.488 M18.8 16.312 V21.688" stroke="#fff" stroke-width="1.8"/></g></svg>
<svg class="ic" style="left:5.0px;top:280.0px" width="24" height="24" viewBox="0 0 24 24"><g transform="translate(12 12) scale(1.05) translate(-12 -12)"><path d="M22.8 1.2 Q12 3.6 6 12 Q2 18 0.6 23.6 L2 23.8 Q2.6 21.4 4.2 19.6 Q10.5 18.4 16.4 12.6 Q21.6 7.6 22.8 1.2 Z" fill="#86aad8" stroke="#2e4a6e" stroke-width=".9" stroke-linejoin="round"/><path d="M2 22.5 Q7.5 11.5 21.5 2.8" stroke="#2e4a6e" stroke-width=".8" fill="none"/><path d="M8 13 Q13 8 20 4.5 M9.5 15.5 Q14 11.5 20.5 7" stroke="#c4d8f0" stroke-width=".8" fill="none"/><rect x="14.6" y="14.8" width="8.4" height="8.4" rx="1.8" fill="#5a9a55" stroke="#4a8045" stroke-width=".6"/><path d="M16.112000000000002 19.0 H21.488 M18.8 16.312 V21.688" stroke="#fff" stroke-width="1.8"/></g></svg>
<svg class="ic" style="left:5.0px;top:310.0px" width="24" height="24" viewBox="0 0 24 24"><g transform="translate(12 12) scale(1.05) translate(-12 -12)"><rect x="1.2" y="1.2" width="21.6" height="21.6" rx="2.4" fill="#a4bcdc" stroke="#7f9cc4" stroke-width="1"/><path d="M2 2 H22 L2 22 Z" fill="#c4d4ea" opacity=".6"/><g transform="translate(2.2 2.6) scale(.8)"><path d="M2.5 3 L9 18.5 L15.5 3.5 Q18.5 2.2 21.5 3" stroke="#2e4a6e" stroke-width="1.3" fill="none"/><path d="M0.6000000000000001 3 L2.5 1.1 L4.4 3 L2.5 4.9 Z" fill="#dce8f6" stroke="#2e4a6e" stroke-width=".9"/><path d="M13.6 3.2 L15.5 1.3000000000000003 L17.4 3.2 L15.5 5.1 Z" fill="#dce8f6" stroke="#2e4a6e" stroke-width=".9"/><path d="M19.6 3 L21.5 1.1 L23.4 3 L21.5 4.9 Z" fill="#dce8f6" stroke="#2e4a6e" stroke-width=".9"/><circle cx="9" cy="18.5" r="1.7" fill="#dce8f6" stroke="#2e4a6e" stroke-width="1"/></g><rect x="14.6" y="14.8" width="8.4" height="8.4" rx="1.8" fill="#5a9a55" stroke="#4a8045" stroke-width=".6"/><path d="M16.112000000000002 19.0 H21.488 M18.8 16.312 V21.688" stroke="#fff" stroke-width="1.8"/></g></svg>
<svg class="ic" style="left:5.0px;top:340.0px" width="24" height="24" viewBox="0 0 24 24"><g transform="translate(12 12) scale(1.05) translate(-12 -12)"><g transform="scale(1.35) translate(-0.3 -0.6)"><ellipse cx="4.3" cy="6" rx="3.7" ry="5" fill="#4a78b0" stroke="#2a5080" stroke-width=".7"/><ellipse cx="11.7" cy="6" rx="3.7" ry="5" fill="#4a78b0" stroke="#2a5080" stroke-width=".7"/><path d="M5 3.5 Q8 -0.5 11 3.5 Q12 8 10.5 10.5 Q10 12.5 10.3 13.3 Q10.6 14 11.6 13.4 L12.2 14.4 Q10.5 16 8.8 15.2 Q7.4 14.2 7.2 11.5 Q5 10.5 4.8 7.5 Z" fill="#5b8cc0" stroke="#2a5080" stroke-width=".7" stroke-linejoin="round"/><circle cx="6.6" cy="6" r=".7" fill="#fff"/><circle cx="9.8" cy="6" r=".7" fill="#fff"/></g><rect x="14.6" y="14.8" width="8.4" height="8.4" rx="1.8" fill="#5a9a55" stroke="#4a8045" stroke-width=".6"/><path d="M16.112000000000002 19.0 H21.488 M18.8 16.312 V21.688" stroke="#fff" stroke-width="1.8"/></g></svg>
<svg class="ic" style="left:5.0px;top:370.0px" width="24" height="24" viewBox="0 0 24 24"><g transform="translate(12 12) scale(1.05) translate(-12 -12)"><ellipse cx="12" cy="11.5" rx="10.5" ry="9.5" fill="#8ab0e0" stroke="#4a78b0" stroke-width="1"/><path d="M4 7 Q6 3.5 9.5 4 L10.5 7 L8.5 9 L9 13 L7 17 L5 12 Z M14 3.5 Q18.5 4.5 20 9 L19 14 L16.5 18 L15 13 L16.5 9 Z" fill="#2e4a6e" opacity=".7"/><path d="M1.5 11.5 H22.5 M3 7 H21 M3 16 H21 M12 2 V21" stroke="#dce8f8" stroke-width=".8" fill="none"/><rect x="14.6" y="14.8" width="8.4" height="8.4" rx="1.8" fill="#5a9a55" stroke="#4a8045" stroke-width=".6"/><path d="M16.112000000000002 19.0 H21.488 M18.8 16.312 V21.688" stroke="#fff" stroke-width="1.8"/></g></svg>
<svg class="ic" style="left:5.0px;top:400.0px" width="24" height="24" viewBox="0 0 24 24"><g transform="translate(12 12) scale(1.05) translate(-12 -12)"><ellipse cx="12" cy="11.5" rx="10.5" ry="9.5" fill="#1f3f66" stroke="#1a3050" stroke-width="1"/><ellipse cx="12" cy="11.5" rx="4.5" ry="9" fill="none" stroke="#cfe0f4" stroke-width="1.2"/><path d="M2 8 H22 V15 H2Z" fill="#6d9cd0"/><path d="M1.5 8 H22.5 M1.5 15 H22.5 M1.5 11.5 H22.5" stroke="#e8f0fa" stroke-width="1.2" fill="none"/><rect x="8.5" y="12" width="7" height="3" fill="#1f3f66"/><rect x="14.6" y="14.8" width="8.4" height="8.4" rx="1.8" fill="#5a9a55" stroke="#4a8045" stroke-width=".6"/><path d="M16.112000000000002 19.0 H21.488 M18.8 16.312 V21.688" stroke="#fff" stroke-width="1.8"/></g></svg>
<svg class="ic" style="left:5.0px;top:430.0px" width="24" height="24" viewBox="0 0 24 24"><g transform="translate(12 12) scale(1.05) translate(-12 -12)"><ellipse cx="12" cy="11.5" rx="10.5" ry="9.5" fill="#e8f0fa" stroke="#5b8cd8" stroke-width="1"/><ellipse cx="12" cy="11.5" rx="5" ry="9.5" fill="none" stroke="#5b8cd8" stroke-width=".8"/><path d="M1.5 11.5 H22.5 M3 7 H21 M3 16 H21 M12 2 V21" stroke="#5b8cd8" stroke-width=".8" fill="none"/><path d="M6 5.5 L10 16.5 L14.5 6 L18 5.5" stroke="#222" stroke-width="1.1" fill="none"/><circle cx="6" cy="5.5" r="1.2" fill="#fff" stroke="#222" stroke-width=".8"/><circle cx="10" cy="16.5" r="1.2" fill="#fff" stroke="#222" stroke-width=".8"/><circle cx="14.5" cy="6" r="1.2" fill="#fff" stroke="#222" stroke-width=".8"/><circle cx="18" cy="5.5" r="1.2" fill="#fff" stroke="#222" stroke-width=".8"/><rect x="14.6" y="14.8" width="8.4" height="8.4" rx="1.8" fill="#5a9a55" stroke="#4a8045" stroke-width=".6"/><path d="M16.112000000000002 19.0 H21.488 M18.8 16.312 V21.688" stroke="#fff" stroke-width="1.8"/></g></svg>
<svg class="ic" style="left:5.0px;top:460.0px" width="24" height="24" viewBox="0 0 24 24"><g transform="translate(12 12) scale(1.05) translate(-12 -12)"><path d="M2.5 3 L9 18.5 L15.5 3.5 Q18.5 2.2 21.5 3" stroke="#2e3f52" stroke-width="1.3" fill="none"/><path d="M0.6000000000000001 3 L2.5 1.1 L4.4 3 L2.5 4.9 Z" fill="#fff" stroke="#2e3f52" stroke-width=".9"/><path d="M13.6 3.2 L15.5 1.3000000000000003 L17.4 3.2 L15.5 5.1 Z" fill="#fff" stroke="#2e3f52" stroke-width=".9"/><path d="M19.6 3 L21.5 1.1 L23.4 3 L21.5 4.9 Z" fill="#fff" stroke="#2e3f52" stroke-width=".9"/><circle cx="9" cy="18.5" r="1.7" fill="#fff" stroke="#2e3f52" stroke-width="1"/><rect x="14.2" y="14.2" width="9" height="9" rx="1.7" fill="#c4a000"/><path d="M18.70 19.10 L17.93 21.94 L19.46 21.94 Z M18.35 18.90 L15.51 19.66 L16.28 20.98 Z M18.35 18.50 L16.28 16.42 L15.51 17.74 Z M18.70 18.30 L19.46 15.46 L17.93 15.46 Z M19.05 18.50 L21.89 17.74 L21.12 16.42 Z M19.05 18.90 L21.12 20.98 L21.89 19.66 Z " fill="#fff" stroke="#fff" stroke-width=".5" stroke-linejoin="round"/></g></svg>
<svg class="ic" style="left:35.0px;top:350.0px" width="7" height="4" viewBox="0 0 7 4"><path d="M0 0 H7 L3.5 4 Z" fill="#222"/></svg>
<svg class="ic" style="left:35.0px;top:470.0px" width="7" height="4" viewBox="0 0 7 4"><path d="M0 0 H7 L3.5 4 Z" fill="#222"/></svg>
<div class="a" style="left:47px;top:147px;width:1px;height:867px;background:#a8a8a8"></div>
<div class="a" style="left:47px;top:148px;width:450px;height:25px;background:#dcdcdc;border:1px solid #b9b9b9"></div><div class="t" style="left:52.40px;top:155.40px;font-size:12px;letter-spacing:-0.503px;">Layers</div><svg class="ic" style="left:457px;top:153px" width="36" height="16" viewBox="0 0 36 16">
<path d="M1.8 6.2 H9.2 V12.5 H1.8 Z" fill="none" stroke="#222" stroke-width="1.6"/><path d="M1.8 6.8 H9.2" stroke="#222" stroke-width="2.4"/>
<path d="M4.5 5 V2.2 H12.2 V9 H10" fill="none" stroke="#222" stroke-width="1.6"/><path d="M4.5 2.6 H12.2" stroke="#222" stroke-width="2.2"/>
<path d="M22.4 2.4 L33.6 13.6 M33.6 2.4 L22.4 13.6" stroke="#2a2a2a" stroke-width="2.5"/></svg>
<svg class="ic" style="left:52.0px;top:180.0px" width="16" height="16" viewBox="0 0 16 16"><path d="M1 9.5 L5 7 L9 9 L5 12 Z" fill="#e82838"/><path d="M1 7.8 L5 5.3 L9 7.3 L5 10.3 Z" fill="#5a90d8"/><path d="M1 6 L5 3.5 L9 5.5 L5 8.5 Z" fill="#f8e448"/><path d="M9.5 8 L15 1.5" stroke="#d08838" stroke-width="2" stroke-linecap="round"/><path d="M5 9.5 L9.2 6.6 L12 9.6 L8.2 13.6 Z" fill="#dcae70" stroke="#b8883c" stroke-width=".6"/><path d="M8.4 7.2 L11.4 10.2" stroke="#b8883c" stroke-width=".8"/></svg>
<svg class="ic" style="left:74.5px;top:180.0px" width="16" height="16" viewBox="0 0 16 16"><path d="M3.5 5.5 H11.5 V13.5 H3.5Z M1.5 7.5 V15 H9" fill="none" stroke="#777" stroke-width=".9"/><path d="M6 8 V3 Q6 1 7.5 1 Q9 1 9 3 V9" fill="none" stroke="#41699a" stroke-width="1.2"/><rect x="9" y="10" width="6" height="6" rx="1.5" fill="#4e924e"/><circle cx="12" cy="13" r="1.7" fill="#cfe4cf"/></svg>
<svg class="ic" style="left:98.5px;top:180.0px" width="16" height="16" viewBox="0 0 16 16"><path d="M.5 8 Q7 0.5 14 8 Q7 14 .5 8Z" fill="#f8f8f8" stroke="#aaa" stroke-width=".9"/><path d="M1.5 5 Q7 0 13 4" stroke="#bbb" stroke-width=".8" fill="none"/><circle cx="7" cy="7.2" r="3.1" fill="#5b8cc0" stroke="#3a6aa8" stroke-width=".6"/><circle cx="7" cy="7.2" r="1.4" fill="#1a2a3a"/><circle cx="6.3" cy="6.4" r=".6" fill="#fff"/><path d="M10 11.5 H15 L12.5 14.5Z" fill="#000"/></svg>
<svg class="ic" style="left:121.5px;top:180.0px" width="16" height="16" viewBox="0 0 16 16"><path d="M1 1 H13 V3 H1Z" fill="#f4dc40"/><path d="M1 3 H13 L8.8 9 V15 L5.2 13 V9 Z" fill="#5b8cc0" stroke="#3a6aa8" stroke-width=".6"/><path d="M9.5 11.5 H14.5 L12 14.5Z" fill="#000"/></svg>
<svg class="ic" style="left:145.0px;top:180.0px" width="16" height="16" viewBox="0 0 16 16"><g opacity="0.9"><text x="5" y="10.5" font-family="Liberation Sans,sans-serif" font-size="15" text-anchor="middle" fill="#b8b8b8">ε</text><path d="M7.5 9 H14 L12.4 12 V15.5 H9.2 V12Z" fill="#ececec" stroke="#d4d4d4" stroke-width=".7"/></g></svg>
<svg class="ic" style="left:179.5px;top:180.0px" width="16" height="16" viewBox="0 0 16 16"><path d="M1 2.5 H13 M2.5 2.5 V13.5 M2.5 7.2 H5 M2.5 12.4 H5" stroke="#999" stroke-width=".9" fill="none"/><rect x="4.2" y="5.4" width="3.6" height="3.6" fill="#fc9a10" stroke="#fff" stroke-width=".5"/><rect x="4.2" y="10.6" width="3.6" height="3.6" fill="#fc9a10" stroke="#fff" stroke-width=".5"/><path d="M10.8 15.4 L15 10 H12.6 V1 H9 V10 H6.6 Z" fill="#6a98d0" stroke="#2e4a7a" stroke-width=".9" stroke-linejoin="round"/></svg>
<svg class="ic" style="left:202.5px;top:180.0px" width="16" height="16" viewBox="0 0 16 16"><path d="M1 2.5 H13 M2.5 2.5 V13.5 M2.5 7.2 H5 M2.5 12.4 H5" stroke="#999" stroke-width=".9" fill="none"/><rect x="4.2" y="5.4" width="3.6" height="3.6" fill="#fc9a10" stroke="#fff" stroke-width=".5"/><rect x="4.2" y="10.6" width="3.6" height="3.6" fill="#fc9a10" stroke="#fff" stroke-width=".5"/><path d="M10.8 0.6 L15 6 H12.6 V15 H9 V6 H6.6 Z" fill="#6a98d0" stroke="#2e4a7a" stroke-width=".9" stroke-linejoin="round"/></svg>
<svg class="ic" style="left:225.0px;top:180.0px" width="16" height="16" viewBox="0 0 16 16"><rect x="1.5" y="1.5" width="11" height="11" fill="#eeeeec" stroke="#888" stroke-width="1"/><rect x="9" y="10.5" width="6.5" height="4.8" rx="1.4" fill="#e82838"/><path d="M10.4 12.9 H14.1" stroke="#fff" stroke-width="1.3"/></svg>
<svg class="ic" style="left:166.0px;top:186.0px" width="7" height="4" viewBox="0 0 7 4"><path d="M0 0 H7 L3.5 4 Z" fill="#777"/></svg>
<div class="a" style="left:47px;top:201px;width:450px;height:360px;background:#fff;border:1px solid #828790"></div>
<div class="a" style="left:68px;top:202px;width:428px;height:20px;background:#d9d9d9"></div>
<svg class="ic" style="left:54.5px;top:207.0px" width="6" height="10" viewBox="0 0 6 10"><path d="M1 1 L5 5 L1 9" stroke="#a0a0a0" stroke-width="1.3" fill="none"/></svg>
<div class="a" style="left:71px;top:206px;width:13px;height:13px;background:#fff;border:1px solid #333"></div>
<svg class="ic" style="left:90.0px;top:204.0px" width="16" height="16" viewBox="0 0 16 16"><rect x="1.90" y="2.00" width="4.45" height="4.45" fill="#1a4a7a"/><rect x="6.30" y="2.00" width="4.45" height="4.45" fill="#78b0e4"/><rect x="10.70" y="2.00" width="4.45" height="4.45" fill="#1a4a7a"/><rect x="1.90" y="6.40" width="4.45" height="4.45" fill="#78b0e4"/><rect x="6.30" y="6.40" width="4.45" height="4.45" fill="#1a4a7a"/><rect x="10.70" y="6.40" width="4.45" height="4.45" fill="#78b0e4"/><rect x="1.90" y="10.80" width="4.45" height="4.45" fill="#1a4a7a"/><rect x="6.30" y="10.80" width="4.45" height="4.45" fill="#78b0e4"/></svg>
<div class="t" style="left:112.30px;top:206.00px;font-size:12px;letter-spacing:-0.047px;font-style:italic;color:#6e6e6e;text-decoration:underline">Esri Street</div>
<div class="a" style="left:71px;top:226px;width:13px;height:13px;background:#fff;border:1px solid #333"></div>
<svg class="ic" style="left:90.0px;top:224.0px" width="16" height="16" viewBox="0 0 16 16"><rect x="0.5" y="0.5" width="15" height="15" fill="#fff" stroke="#111" stroke-width="1"/></svg>
<div class="t" style="left:112.50px;top:225.80px;font-size:12px;letter-spacing:0.289px;font-style:italic;color:#808080">110m_admin_0_countries-outlines</div>
<svg class="ic" style="left:54.5px;top:247.0px" width="6" height="10" viewBox="0 0 6 10"><path d="M1 1 L5 5 L1 9" stroke="#a0a0a0" stroke-width="1.3" fill="none"/></svg>
<div class="a" style="left:71px;top:246px;width:13px;height:13px;background:#fff;border:1px solid #333"></div>
<svg class="ic" style="left:90.0px;top:244.5px" width="16" height="16" viewBox="0 0 16 16"><path d="M3.3 1 Q6 1 8.7 2.9 Q11 1.2 12.9 1.5 Q15.8 2 15.6 5.2 Q15.8 9 14.5 9.8 Q11.5 7.5 8.7 8.1 Q5.5 9.5 2.9 12.1 Q0.5 12 0.2 9 Q0 5 0.6 3.3 Q1.2 1 3.3 1 Z" fill="#e2e2e2" stroke="#a4a4a0" stroke-width=".9"/></svg>
<div class="t" style="left:112.50px;top:245.80px;font-size:12px;letter-spacing:0.196px;font-style:italic;color:#808080">110m_admin_0_countries</div>
<svg class="ic" style="left:52.5px;top:269.0px" width="10" height="6" viewBox="0 0 10 6"><path d="M1 1 L5 5 L9 1" stroke="#222" stroke-width="1.5" fill="none"/></svg>
<div class="a" style="left:71px;top:266px;width:13px;height:13px;background:#fff;border:1px solid #333"></div><svg class="ic" style="left:71px;top:266px" width="13" height="13" viewBox="0 0 13 13"><path d="M2.5 6.5 L5.2 9.3 L10.5 3.2" stroke="#222" stroke-width="1.2" fill="none"/></svg>
<svg class="ic" style="left:90.0px;top:264.0px" width="16" height="16" viewBox="0 0 16 16"><rect x="2.00" y="2.00" width="4.38" height="4.38" fill="#24364e"/><rect x="6.33" y="2.00" width="4.38" height="4.38" fill="#a8c8e8"/><rect x="10.67" y="2.00" width="4.38" height="4.38" fill="#24364e"/><rect x="2.00" y="6.33" width="4.38" height="4.38" fill="#a8c8e8"/><rect x="6.33" y="6.33" width="4.38" height="4.38" fill="#24364e"/><rect x="10.67" y="6.33" width="4.38" height="4.38" fill="#a8c8e8"/><rect x="2.00" y="10.67" width="4.38" height="4.38" fill="#24364e"/><rect x="6.33" y="10.67" width="4.38" height="4.38" fill="#a8c8e8"/></svg>
<div class="t" style="left:112.30px;top:265.80px;font-size:12px;letter-spacing:-0.248px;font-weight:bold;">OSM Standard</div>
<div class="a" style="left:47px;top:566px;width:450px;height:25px;background:#dcdcdc;border:1px solid #b9b9b9"></div><div class="t" style="left:52.40px;top:573.00px;font-size:12px;letter-spacing:-0.373px;">Browser</div><svg class="ic" style="left:457px;top:571px" width="36" height="16" viewBox="0 0 36 16">
<path d="M1.8 6.2 H9.2 V12.5 H1.8 Z" fill="none" stroke="#222" stroke-width="1.6"/><path d="M1.8 6.8 H9.2" stroke="#222" stroke-width="2.4"/>
<path d="M4.5 5 V2.2 H12.2 V9 H10" fill="none" stroke="#222" stroke-width="1.6"/><path d="M4.5 2.6 H12.2" stroke="#222" stroke-width="2.2"/>
<path d="M22.4 2.4 L33.6 13.6 M33.6 2.4 L22.4 13.6" stroke="#2a2a2a" stroke-width="2.5"/></svg>
<svg class="ic" style="left:52.0px;top:598.0px" width="16" height="16" viewBox="0 0 16 16"><rect x="1.5" y="1.5" width="11" height="11" fill="#eeeeec" stroke="#888" stroke-width="1"/><rect x="9" y="9.8" width="6" height="6" rx="1.5" fill="#4e924e"/><circle cx="12" cy="12.8" r="1.7" fill="#cfe4cf"/></svg>
<svg class="ic" style="left:75.0px;top:598.0px" width="16" height="16" viewBox="0 0 16 16"><g transform="translate(-1.5 -1.5) scale(.79)"><path d="M3 11 Q3.5 4.5 11 3.5 Q15.5 3.5 17.8 6.2 L20.5 3.5 V11.5 H12.5 L15.2 8.8 Q13.5 7 11 7.2 Q7.5 7.8 7 11 Z" fill="#4a86c8" stroke="#3a70b0" stroke-width=".5"/><path d="M21 13 Q20.5 19.5 13 20.5 Q8.5 20.5 6.2 17.8 L3.5 20.5 V12.5 H11.5 L8.8 15.2 Q10.5 17 13 16.8 Q16.5 16.2 17 13 Z" fill="#3f7cc0" stroke="#3a70b0" stroke-width=".5"/></g></svg>
<svg class="ic" style="left:98.0px;top:598.0px" width="16" height="16" viewBox="0 0 16 16"><path d="M1.5 1 H14.5 V3 H1.5Z" fill="#f4dc40"/><path d="M1.5 3 H14.5 L10 9 V15 L6 13 V9 Z" fill="#5b8cc0" stroke="#3a6aa8" stroke-width=".6"/></svg>
<svg class="ic" style="left:121.5px;top:598.0px" width="16" height="16" viewBox="0 0 16 16"><path d="M1 2.5 H13 M2.5 2.5 V13.5 M2.5 7.2 H5 M2.5 12.4 H5" stroke="#999" stroke-width=".9" fill="none"/><rect x="4.2" y="5.4" width="3.6" height="3.6" fill="#fc9a10" stroke="#fff" stroke-width=".5"/><rect x="4.2" y="10.6" width="3.6" height="3.6" fill="#fc9a10" stroke="#fff" stroke-width=".5"/><path d="M10.8 0.6 L15 6 H12.6 V15 H9 V6 H6.6 Z" fill="#6a98d0" stroke="#2e4a7a" stroke-width=".9" stroke-linejoin="round"/></svg>
<svg class="ic" style="left:144.0px;top:598.0px" width="16" height="16" viewBox="0 0 16 16"><circle cx="8" cy="8" r="7" fill="#5b8cc0" stroke="#4a78b0" stroke-width=".8"/><text x="8.2" y="12.3" font-family="Liberation Serif,serif" font-style="italic" font-weight="bold" font-size="12" text-anchor="middle" fill="#fff">i</text></svg>
<div class="a" style="left:47px;top:619px;width:450px;height:395px;background:#fff;border:1px solid #828790"></div>
<div class="a" style="left:0;top:0;width:480px;height:1013px;overflow:hidden"><svg class="ic" style="left:67.0px;top:623.0px" width="16" height="16" viewBox="0 0 16 16"><path d="M8 .8 L10.2 5.6 L15.4 6.2 L11.5 9.8 L12.6 15 L8 12.3 L3.4 15 L4.5 9.8 L.6 6.2 L5.8 5.6 Z" fill="#fdf48c" stroke="#d4b000" stroke-width="1" stroke-linejoin="round"/></svg>
<div class="t" style="left:89.20px;top:624.40px;font-size:12px;letter-spacing:-0.316px;">Favorites</div>
<svg class="ic" style="left:52.5px;top:646.0px" width="6" height="10" viewBox="0 0 6 10"><path d="M1 1 L5 5 L1 9" stroke="#a0a0a0" stroke-width="1.3" fill="none"/></svg>
<svg class="ic" style="left:67.0px;top:643.0px" width="16" height="16" viewBox="0 0 16 16"><path d="M3 1.5 H14.5 V13.5 H4.5 Q2 13.5 2 11.5 V2.5" fill="#e4e4e4" stroke="#999" stroke-width=".8"/><path d="M2 2.5 Q2 1 3.2 1 Q4.5 1 4.5 2.5 V12 Q4.5 13.5 3.2 13.5 Q2 13.5 2 12Z" fill="#f6f6f6" stroke="#999" stroke-width=".7"/><path d="M9.5 .5 H12.5 V5.5 L11 7 L9.5 5.5Z" fill="#5b8cc0" stroke="#41699a" stroke-width=".5"/></svg>
<div class="t" style="left:89.20px;top:644.40px;font-size:12px;letter-spacing:-0.203px;">Spatial Bookmarks</div>
<svg class="ic" style="left:52.5px;top:666.0px" width="6" height="10" viewBox="0 0 6 10"><path d="M1 1 L5 5 L1 9" stroke="#a0a0a0" stroke-width="1.3" fill="none"/></svg>
<svg class="ic" style="left:67.0px;top:663.0px" width="16" height="16" viewBox="0 0 16 16"><rect x="1" y="1.5" width="14" height="13" fill="#88d048" stroke="#5aa028" stroke-width=".8"/><path d="M1 2 L8 9 L15 2" fill="#a8e868" stroke="#fff" stroke-width="1"/><path d="M7.5 6.5 L11 3.5 L14 7 V11 H9 Z" fill="#1a6a1a"/><path d="M1 14 L6 8" stroke="#fff" stroke-width=".8"/></svg>
<div class="t" style="left:89.20px;top:664.40px;font-size:12px;letter-spacing:-0.008px;">Project Home</div>
<svg class="ic" style="left:52.5px;top:686.0px" width="6" height="10" viewBox="0 0 6 10"><path d="M1 1 L5 5 L1 9" stroke="#a0a0a0" stroke-width="1.3" fill="none"/></svg>
<svg class="ic" style="left:67.0px;top:683.0px" width="16" height="16" viewBox="0 0 16 16"><rect x="1.5" y="1.5" width="13" height="13" rx="1" fill="#fdfdfd" stroke="#777" stroke-width=".9"/><path d="M4.5 8.5 L8 5 L11.5 8.5 M5.5 8 V11.5 H10.5 V8" fill="none" stroke="#222" stroke-width="1"/></svg>
<div class="t" style="left:89.20px;top:684.40px;font-size:12px;letter-spacing:0.173px;">Home</div>
<svg class="ic" style="left:52.5px;top:706.0px" width="6" height="10" viewBox="0 0 6 10"><path d="M1 1 L5 5 L1 9" stroke="#a0a0a0" stroke-width="1.3" fill="none"/></svg>
<svg class="ic" style="left:67.0px;top:703.0px" width="16" height="16" viewBox="0 0 16 16"><path d="M1.5 3 H6 L7.5 4.5 H14.5 V13.5 H1.5 Z" fill="#fbfbfb" stroke="#888" stroke-width=".9"/></svg>
<div class="t" style="left:89.20px;top:704.40px;font-size:12px;letter-spacing:0.022px;">C:\</div>
<svg class="ic" style="left:52.5px;top:726.0px" width="6" height="10" viewBox="0 0 6 10"><path d="M1 1 L5 5 L1 9" stroke="#a0a0a0" stroke-width="1.3" fill="none"/></svg>
<svg class="ic" style="left:67.0px;top:723.0px" width="16" height="16" viewBox="0 0 16 16"><path d="M1.5 3 H6 L7.5 4.5 H14.5 V13.5 H1.5 Z" fill="#fbfbfb" stroke="#888" stroke-width=".9"/></svg>
<div class="t" style="left:89.20px;top:724.40px;font-size:12px;letter-spacing:0.022px;">D:\</div>
<svg class="ic" style="left:52.5px;top:746.0px" width="6" height="10" viewBox="0 0 6 10"><path d="M1 1 L5 5 L1 9" stroke="#a0a0a0" stroke-width="1.3" fill="none"/></svg>
<svg class="ic" style="left:67.0px;top:743.0px" width="16" height="16" viewBox="0 0 16 16"><path d="M1.5 3 H6 L7.5 4.5 H14.5 V13.5 H1.5 Z" fill="#fbfbfb" stroke="#888" stroke-width=".9"/></svg>
<div class="t" style="left:89.20px;top:744.40px;font-size:12px;letter-spacing:0.124px;">V:\</div>
<svg class="ic" style="left:67.0px;top:763.0px" width="16" height="16" viewBox="0 0 16 16"><path d="M1 7 L8 4.5 L15 7 V12 L8 15.5 L1 12Z" fill="#e8c818" stroke="#6a5400" stroke-width=".8"/><path d="M8 9.5 L15 7 V12 L8 15.5Z" fill="#fce94f" stroke="#6a5400" stroke-width=".6"/><path d="M1 7 L8 9.5 V15.5 L1 12Z" fill="#c9a000" stroke="#6a5400" stroke-width=".6"/><circle cx="8.5" cy="5" r="4.4" fill="#8ab4e4" stroke="#41699a" stroke-width=".7"/><path d="M5.5 3.5 Q6.5 2 8 2.3 L8.6 3.8 L7.5 5 L8 6.8 L7 8 L6 6 Z M9.8 1.8 Q11.8 2.4 12.4 4.5 L11.8 7 L10.6 8.2 L10 6 L10.7 4.3 Z" fill="#2e4a6e" opacity=".85"/></svg>
<div class="t" style="left:89.20px;top:764.40px;font-size:12px;letter-spacing:-0.478px;">GeoPackage</div>
<svg class="ic" style="left:67.0px;top:783.0px" width="16" height="16" viewBox="0 0 16 16"><g transform="scale(.67)"><path d="M22.8 1.2 Q12 3.6 6 12 Q2 18 0.6 23.6 L2 23.8 Q2.6 21.4 4.2 19.6 Q10.5 18.4 16.4 12.6 Q21.6 7.6 22.8 1.2 Z" fill="#86aad8" stroke="#2e4a6e" stroke-width=".9" stroke-linejoin="round"/><path d="M2 22.5 Q7.5 11.5 21.5 2.8" stroke="#2e4a6e" stroke-width=".8" fill="none"/><path d="M8 13 Q13 8 20 4.5 M9.5 15.5 Q14 11.5 20.5 7" stroke="#c4d8f0" stroke-width=".8" fill="none"/></g></svg>
<div class="t" style="left:89.20px;top:784.40px;font-size:12px;letter-spacing:-0.287px;">SpatiaLite</div>
<svg class="ic" style="left:52.5px;top:806.0px" width="6" height="10" viewBox="0 0 6 10"><path d="M1 1 L5 5 L1 9" stroke="#a0a0a0" stroke-width="1.3" fill="none"/></svg>
<svg class="ic" style="left:67.0px;top:803.0px" width="16" height="16" viewBox="0 0 16 16"><ellipse cx="4.3" cy="6" rx="3.7" ry="5" fill="#4a78b0" stroke="#2a5080" stroke-width=".7"/><ellipse cx="11.7" cy="6" rx="3.7" ry="5" fill="#4a78b0" stroke="#2a5080" stroke-width=".7"/><path d="M5 3.5 Q8 -0.5 11 3.5 Q12 8 10.5 10.5 Q10 12.5 10.3 13.3 Q10.6 14 11.6 13.4 L12.2 14.4 Q10.5 16 8.8 15.2 Q7.4 14.2 7.2 11.5 Q5 10.5 4.8 7.5 Z" fill="#5b8cc0" stroke="#2a5080" stroke-width=".7" stroke-linejoin="round"/><circle cx="6.6" cy="6" r=".7" fill="#fff"/><circle cx="9.8" cy="6" r=".7" fill="#fff"/></svg>
<div class="t" style="left:89.20px;top:804.40px;font-size:12px;letter-spacing:-0.726px;">PostGIS</div>
<svg class="ic" style="left:67.0px;top:823.0px" width="16" height="16" viewBox="0 0 16 16"><rect x="1" y="1" width="14" height="14" fill="none" stroke="#2e4a6a" stroke-width="1" stroke-dasharray="1 1.33"/><rect x="3" y="3" width="10" height="10" fill="#6590c8"/></svg>
<div class="t" style="left:89.20px;top:824.40px;font-size:12px;letter-spacing:-0.436px;">SAP HANA</div>
<svg class="ic" style="left:67.0px;top:843.0px" width="16" height="16" viewBox="0 0 16 16"><path d="M1 1 Q9 2 15.5 8 Q9 10 1.5 15.5 Q5 8 1 1Z" fill="#6d97c4" stroke="#3a5a84" stroke-width=".8"/><path d="M5 2 Q8.5 8 5 13 M9 3.5 Q11.5 8 9 11" stroke="#3a5a84" stroke-width=".7" fill="none"/></svg>
<div class="t" style="left:89.20px;top:844.40px;font-size:12px;letter-spacing:-0.962px;">MSSQL</div>
<svg class="ic" style="left:67.0px;top:863.0px" width="16" height="16" viewBox="0 0 16 16"><rect x="1" y="3" width="14.5" height="10" rx="4.5" fill="#6d97c4" stroke="#2e4a6a" stroke-width="1.2"/></svg>
<div class="t" style="left:89.20px;top:864.40px;font-size:12px;letter-spacing:-0.257px;">Oracle</div>
<svg class="ic" style="left:50.5px;top:888.0px" width="10" height="6" viewBox="0 0 10 6"><path d="M1 1 L5 5 L9 1" stroke="#222" stroke-width="1.5" fill="none"/></svg>
<svg class="ic" style="left:67.0px;top:883.0px" width="16" height="16" viewBox="0 0 16 16"><circle cx="8" cy="8" r="7.2" fill="#8ab0e0" stroke="#5b8cc0" stroke-width=".8"/><path d="M2.8 5 Q4 2.6 6.5 2.8 L7.2 5 L5.8 6.4 L6.2 9 L4.8 12 L3.4 8.5 Z M9.6 2.4 Q12.6 3.2 13.6 6.2 L13 9.6 L11.2 12.4 L10.2 9 L11.2 6.2 Z" fill="#2e4a6e" opacity=".7"/><path d="M1 8 H15 M2 5 H14 M2 11 H14 M8 1 V15" stroke="#dce8f8" stroke-width=".6" fill="none"/></svg>
<div class="t" style="left:89.20px;top:884.40px;font-size:12px;letter-spacing:-0.352px;">WMS/WMTS</div>
<svg class="ic" style="left:68.5px;top:906.0px" width="6" height="10" viewBox="0 0 6 10"><path d="M1 1 L5 5 L1 9" stroke="#a0a0a0" stroke-width="1.3" fill="none"/></svg>
<svg class="ic" style="left:83.0px;top:903.0px" width="16" height="16" viewBox="0 0 16 16"><path d="M2.5 7.5 H8.5 L12.8 4.6 M8.5 7.5 L12.8 10.4" stroke="#a86c10" stroke-width="1.7" fill="none" stroke-linejoin="round"/></svg>
<div class="t" style="left:105.70px;top:904.40px;font-size:12px;letter-spacing:0.132px;">cropmonitordata.org</div>
<svg class="ic" style="left:68.5px;top:926.0px" width="6" height="10" viewBox="0 0 6 10"><path d="M1 1 L5 5 L1 9" stroke="#a0a0a0" stroke-width="1.3" fill="none"/></svg>
<svg class="ic" style="left:83.0px;top:923.0px" width="16" height="16" viewBox="0 0 16 16"><path d="M2.5 7.5 H8.5 L12.8 4.6 M8.5 7.5 L12.8 10.4" stroke="#a86c10" stroke-width="1.7" fill="none" stroke-linejoin="round"/></svg>
<div class="t" style="left:105.70px;top:924.40px;font-size:12px;letter-spacing:0.020px;">geomet-climate-8999</div>
<svg class="ic" style="left:68.5px;top:946.0px" width="6" height="10" viewBox="0 0 6 10"><path d="M1 1 L5 5 L1 9" stroke="#a0a0a0" stroke-width="1.3" fill="none"/></svg>
<svg class="ic" style="left:83.0px;top:943.0px" width="16" height="16" viewBox="0 0 16 16"><path d="M2.5 7.5 H8.5 L12.8 4.6 M8.5 7.5 L12.8 10.4" stroke="#a86c10" stroke-width="1.7" fill="none" stroke-linejoin="round"/></svg>
<div class="t" style="left:105.70px;top:944.40px;font-size:12px;letter-spacing:0.151px;">geomet-climate-dev-en</div>
<svg class="ic" style="left:68.5px;top:966.0px" width="6" height="10" viewBox="0 0 6 10"><path d="M1 1 L5 5 L1 9" stroke="#a0a0a0" stroke-width="1.3" fill="none"/></svg>
<svg class="ic" style="left:83.0px;top:963.0px" width="16" height="16" viewBox="0 0 16 16"><path d="M2.5 7.5 H8.5 L12.8 4.6 M8.5 7.5 L12.8 10.4" stroke="#a86c10" stroke-width="1.7" fill="none" stroke-linejoin="round"/></svg>
<div class="t" style="left:105.70px;top:964.40px;font-size:12px;letter-spacing:0.219px;">geomet-climate-dev-fr</div>
<svg class="ic" style="left:68.5px;top:986.0px" width="6" height="10" viewBox="0 0 6 10"><path d="M1 1 L5 5 L1 9" stroke="#a0a0a0" stroke-width="1.3" fill="none"/></svg>
<svg class="ic" style="left:83.0px;top:983.0px" width="16" height="16" viewBox="0 0 16 16"><path d="M2.5 7.5 H8.5 L12.8 4.6 M8.5 7.5 L12.8 10.4" stroke="#a86c10" stroke-width="1.7" fill="none" stroke-linejoin="round"/></svg>
<div class="t" style="left:105.70px;top:984.40px;font-size:12px;letter-spacing:0.221px;">geomet-climate-nightly-dev</div>
<svg class="ic" style="left:68.5px;top:1006.0px" width="6" height="10" viewBox="0 0 6 10"><path d="M1 1 L5 5 L1 9" stroke="#a0a0a0" stroke-width="1.3" fill="none"/></svg>
<svg class="ic" style="left:83.0px;top:1003.0px" width="16" height="16" viewBox="0 0 16 16"><path d="M2.5 7.5 H8.5 L12.8 4.6 M8.5 7.5 L12.8 10.4" stroke="#a86c10" stroke-width="1.7" fill="none" stroke-linejoin="round"/></svg>
<div class="t" style="left:105.70px;top:1004.40px;font-size:12px;letter-spacing:0.226px;">geomet-climate-nightly-en</div></div>
<div class="a" style="left:480px;top:620px;width:15px;height:393px;background:#f0f0f0"></div>
<div class="a" style="left:480px;top:637px;width:15px;height:63px;background:#cdcdcd"></div>
<svg class="ic" style="left:483px;top:626px" width="9" height="6" viewBox="0 0 9 6"><path d="M1 5.2 L4.5 1.7 L8 5.2" stroke="#555" stroke-width="2" fill="none"/></svg>
<svg class="ic" style="left:483px;top:1002px" width="9" height="6" viewBox="0 0 9 6"><path d="M1 .8 L4.5 4.3 L8 .8" stroke="#555" stroke-width="2" fill="none"/></svg>
<div class="a" style="left:0px;top:145px;width:1916px;height:1px;background:#f8f8f8"></div>
<div class="a" style="left:0px;top:146px;width:1916px;height:1px;background:#c4c4c4"></div>
<div class="a" style="left:497px;top:148px;width:4px;height:866px;background:#f4f4f4"></div>
<div class="a" style="left:501px;top:147px;width:1415px;height:867px;background:#828790"></div>
<svg class="ic" style="left:502px;top:148px;overflow:hidden" width="1414" height="865" viewBox="0 0 1414 865">
<defs><filter id="bl" x="-20%" y="-20%" width="140%" height="140%"><feGaussianBlur stdDeviation="2.2"/></filter><filter id="bl1"><feGaussianBlur stdDeviation=".6"/></filter><filter id="veg" x="-10%" y="-10%" width="120%" height="120%"><feGaussianBlur in="SourceGraphic" stdDeviation="2.6" result="b"/><feTurbulence type="fractalNoise" baseFrequency="0.2" numOctaves="3" seed="7" result="n"/><feColorMatrix in="n" type="matrix" values="0 0 0 0 0  0 0 0 0 0  0 0 0 0 0  0 0 0 4.5 -1.75" result="m"/><feComposite in="b" in2="m" operator="in" result="c"/><feGaussianBlur in="c" stdDeviation=".55"/></filter><filter id="vegd" x="-10%" y="-10%" width="120%" height="120%"><feGaussianBlur in="SourceGraphic" stdDeviation="2.6" result="b"/><feTurbulence type="fractalNoise" baseFrequency="0.2" numOctaves="3" seed="11" result="n"/><feColorMatrix in="n" type="matrix" values="0 0 0 0 0  0 0 0 0 0  0 0 0 0 0  0 0 0 4.5 -1.35" result="m"/><feComposite in="b" in2="m" operator="in" result="c"/><feGaussianBlur in="c" stdDeviation=".55"/></filter><clipPath id="cn"><path d="M1212.5 186.5 L1217.0 184.5 L1221.5 185.0 L1222.0 190.0 L1223.0 194.7 L1227.0 198.0 L1230.5 201.3 L1233.0 199.5 L1236.0 202.5 L1242.0 205.4 L1248.0 207.5 L1253.5 211.0 L1257.0 214.0 L1260.0 217.6 L1262.0 222.0 L1263.3 227.5 L1264.5 232.0 L1265.0 235.6 L1264.0 240.0 L1266.5 243.8 L1269.0 248.0 L1271.5 253.6 L1271.0 257.0 L1273.0 260.2 L1272.0 264.0 L1276.4 268.4 L1281.0 270.0 L1285.0 272.0 L1287.0 277.0 L1290.0 280.5 L1292.0 276.0 L1291.0 270.0 L1289.0 264.0 L1286.2 256.0 L1289.0 256.5 L1292.7 260.2 L1296.0 264.0 L1299.3 268.4 L1300.0 274.0 L1301.0 280.0 L1301.0 286.4 L1306.0 292.0 L1312.4 297.8 L1320.0 302.5 L1327.0 306.0 L1333.0 307.0 L1338.6 306.0 L1345.0 302.0 L1351.7 297.8 L1356.0 294.5 L1361.5 293.0 L1368.0 293.5 L1373.0 295.4 L1374.6 301.0 L1371.3 308.4 L1368.0 321.5 L1363.0 331.3 L1359.0 339.5 L1358.2 347.6 L1356.6 351.7 L1355.0 346.0 L1348.4 346.0 L1340.2 349.3 L1333.7 357.5 L1332.0 364.0 L1333.7 369.0 L1330.4 380.4 L1325.5 390.2 L1319.0 403.3 L1312.4 414.7 L1307.5 426.2 L1301.0 436.0 L1292.7 442.6 L1286.2 440.0 L1281.3 441.8 L1276.0 438.0 L1279.7 427.8 L1282.0 416.4 L1283.0 403.3 L1281.3 390.2 L1276.4 380.4 L1268.2 373.8 L1258.4 367.3 L1248.6 362.4 L1242.8 356.6 L1242.8 351.7 L1247.0 347.6 L1256.7 344.4 L1265.0 341.0 L1268.2 333.0 L1269.0 324.7 L1268.2 316.5 L1269.0 308.4 L1269.8 300.2 L1268.2 293.0 L1265.0 279.8 L1260.0 268.4 L1253.5 257.0 L1245.3 243.8 L1233.8 227.5 L1222.4 211.0 L1216.0 197.0 Z"/></clipPath><clipPath id="cs"><path d="M1211.9 398.5 L1217.0 398.0 L1221.4 399.3 L1216.0 401.5 L1215.0 405.0 L1219.9 408.7 L1222.1 407.9 L1222.7 417.1 L1224.0 425.6 L1231.0 423.4 L1240.7 413.4 L1244.8 405.0 L1249.0 411.6 L1257.8 415.3 L1258.6 420.8 L1251.7 430.0 L1251.2 435.5 L1256.7 442.2 L1261.2 439.0 L1254.3 451.3 L1250.8 454.8 L1243.9 465.0 L1238.7 475.5 L1230.0 486.0 L1219.6 494.6 L1216.2 503.3 L1215.3 513.6 L1220.0 515.0 L1224.5 518.0 L1222.0 522.5 L1214.5 524.0 L1205.8 521.0 L1198.9 524.0 L1188.5 532.7 L1179.1 538.0 L1172.2 548.4 L1168.7 560.5 L1165.2 570.9 L1161.8 581.3 L1158.3 590.0 L1153.1 596.9 L1146.2 605.5 L1139.3 615.9 L1130.6 624.6 L1121.9 631.5 L1111.5 633.3 L1101.1 629.8 L1090.7 628.0 L1087.3 622.9 L1075.2 619.4 L1068.2 616.0 L1056.1 615.0 L1044.0 613.3 L1039.7 606.4 L1038.8 596.9 L1044.0 586.5 L1050.9 576.1 L1057.8 565.7 L1068.2 555.3 L1076.9 546.6 L1085.6 540.6 L1093.2 534.4 L1105.3 527.5 L1119.2 518.8 L1131.3 510.2 L1143.4 501.5 L1153.8 492.9 L1164.2 482.5 L1172.9 468.6 L1176.3 454.8 L1178.9 444.4 L1185.0 439.2 L1191.9 427.0 L1195.4 416.6 L1198.9 408.0 Z M1075.2 635.9 L1082.1 635.9 L1088.2 645.4 L1083.8 652.3 L1070.0 659.2 L1066.5 656.6 L1073.4 647.1 L1074.3 640.2 Z"/></clipPath></defs>
<rect width="1414" height="865" fill="#aad3df"/>
<g transform="translate(0 -1)">
<path d="M0 0 H688 L686 6 L683 12 L681 20 L679 26 H124 V120 L124 120 L120 117 L112 110 L106 106 L98 106 L92 110.5 L86 108 L78 100 L68 92 L62 89.5 L55 92 L40 93 L20 94 L0 96 Z" fill="#f2efe9"/>
<path d="M0 97.5 L20 95.5 L40 94.5 L55 93.5 L62 91 L68 93.5 L78 101.5 L86 109.5 L92 112 L98 107.5 L106 107.5 L112 111.5 L120 118.5" fill="none" stroke="#c4dde8" stroke-width="2.5"/>
<path d="M0 102.5 L20 100.5 L40 99.5 L55 98.5 L62 96 L67 98 L76 106 L83 114 L92 117.5 L99 113 L106 113 L113 119 L117 126 L124 130" fill="none" stroke="#a08eb4" stroke-width="1.2"/>
<path d="M2.6 0 V93" stroke="#d4b8d4" stroke-width="1"/>
<path d="M334.5 0 V22 M334.5 9.8 H554 L567 0 M611 0 L615 8 L621 15 L628 10 L640 5.5" stroke="#c8aacc" stroke-width="1.1" fill="none"/>
<g fill="#9ccbe0"><rect x="40" y="15" width="3" height="2"/><rect x="58" y="17" width="6" height="1.6"/><rect x="57" y="22" width="3" height="1.2"/><rect x="56" y="26" width="9" height="2.2"/><rect x="178" y="6" width="6" height="1.6"/><rect x="184" y="10" width="3" height="1.4"/><rect x="221" y="5.5" width="24" height="2.4"/><rect x="222" y="10" width="6" height="2"/><rect x="232" y="10" width="3" height="2"/><rect x="237" y="10" width="11" height="2"/><rect x="238" y="15" width="6" height="2"/><rect x="250" y="14.5" width="4" height="1.5"/><rect x="228" y="20.5" width="14" height="2"/><rect x="279" y="11" width="2" height="1.5"/><rect x="284" y="14" width="4" height="1.4"/><rect x="290" y="16.5" width="10" height="2"/><rect x="296" y="20.5" width="8" height="2"/></g>
<g fill="#add19e" filter="url(#bl1)"><path d="M367 1 Q372 0 376 2 L380 10 L388 18 L392 21 H384 L374 14 L369 7 Z" opacity=".95"/><path d="M604 2 L612 1 L614 8 L608 12 Z M622 6 L626 3 L628 16 L624 18Z M640 1 H660 L664 8 L670 16 L676 20 H646 L642 14 L644 8Z" opacity=".75"/><path d="M650 3 H658 V18 H650Z" opacity=".5"/></g>
<path d="M688 0 L686 6 L683 12 L682 17 L679 22" fill="none" stroke="#bcdcec" stroke-width="4"/>
<path d="M691.5 0 L690 6 L687 12 L686 17 L683 23" fill="none" stroke="#a08eb4" stroke-width="1.2"/>
</g>
<path d="M1212.5 186.5 L1217.0 184.5 L1221.5 185.0 L1222.0 190.0 L1223.0 194.7 L1227.0 198.0 L1230.5 201.3 L1233.0 199.5 L1236.0 202.5 L1242.0 205.4 L1248.0 207.5 L1253.5 211.0 L1257.0 214.0 L1260.0 217.6 L1262.0 222.0 L1263.3 227.5 L1264.5 232.0 L1265.0 235.6 L1264.0 240.0 L1266.5 243.8 L1269.0 248.0 L1271.5 253.6 L1271.0 257.0 L1273.0 260.2 L1272.0 264.0 L1276.4 268.4 L1281.0 270.0 L1285.0 272.0 L1287.0 277.0 L1290.0 280.5 L1292.0 276.0 L1291.0 270.0 L1289.0 264.0 L1286.2 256.0 L1289.0 256.5 L1292.7 260.2 L1296.0 264.0 L1299.3 268.4 L1300.0 274.0 L1301.0 280.0 L1301.0 286.4 L1306.0 292.0 L1312.4 297.8 L1320.0 302.5 L1327.0 306.0 L1333.0 307.0 L1338.6 306.0 L1345.0 302.0 L1351.7 297.8 L1356.0 294.5 L1361.5 293.0 L1368.0 293.5 L1373.0 295.4 L1374.6 301.0 L1371.3 308.4 L1368.0 321.5 L1363.0 331.3 L1359.0 339.5 L1358.2 347.6 L1356.6 351.7 L1355.0 346.0 L1348.4 346.0 L1340.2 349.3 L1333.7 357.5 L1332.0 364.0 L1333.7 369.0 L1330.4 380.4 L1325.5 390.2 L1319.0 403.3 L1312.4 414.7 L1307.5 426.2 L1301.0 436.0 L1292.7 442.6 L1286.2 440.0 L1281.3 441.8 L1276.0 438.0 L1279.7 427.8 L1282.0 416.4 L1283.0 403.3 L1281.3 390.2 L1276.4 380.4 L1268.2 373.8 L1258.4 367.3 L1248.6 362.4 L1242.8 356.6 L1242.8 351.7 L1247.0 347.6 L1256.7 344.4 L1265.0 341.0 L1268.2 333.0 L1269.0 324.7 L1268.2 316.5 L1269.0 308.4 L1269.8 300.2 L1268.2 293.0 L1265.0 279.8 L1260.0 268.4 L1253.5 257.0 L1245.3 243.8 L1233.8 227.5 L1222.4 211.0 L1216.0 197.0 Z M1211.9 398.5 L1217.0 398.0 L1221.4 399.3 L1216.0 401.5 L1215.0 405.0 L1219.9 408.7 L1222.1 407.9 L1222.7 417.1 L1224.0 425.6 L1231.0 423.4 L1240.7 413.4 L1244.8 405.0 L1249.0 411.6 L1257.8 415.3 L1258.6 420.8 L1251.7 430.0 L1251.2 435.5 L1256.7 442.2 L1261.2 439.0 L1254.3 451.3 L1250.8 454.8 L1243.9 465.0 L1238.7 475.5 L1230.0 486.0 L1219.6 494.6 L1216.2 503.3 L1215.3 513.6 L1220.0 515.0 L1224.5 518.0 L1222.0 522.5 L1214.5 524.0 L1205.8 521.0 L1198.9 524.0 L1188.5 532.7 L1179.1 538.0 L1172.2 548.4 L1168.7 560.5 L1165.2 570.9 L1161.8 581.3 L1158.3 590.0 L1153.1 596.9 L1146.2 605.5 L1139.3 615.9 L1130.6 624.6 L1121.9 631.5 L1111.5 633.3 L1101.1 629.8 L1090.7 628.0 L1087.3 622.9 L1075.2 619.4 L1068.2 616.0 L1056.1 615.0 L1044.0 613.3 L1039.7 606.4 L1038.8 596.9 L1044.0 586.5 L1050.9 576.1 L1057.8 565.7 L1068.2 555.3 L1076.9 546.6 L1085.6 540.6 L1093.2 534.4 L1105.3 527.5 L1119.2 518.8 L1131.3 510.2 L1143.4 501.5 L1153.8 492.9 L1164.2 482.5 L1172.9 468.6 L1176.3 454.8 L1178.9 444.4 L1185.0 439.2 L1191.9 427.0 L1195.4 416.6 L1198.9 408.0 Z M1075.2 635.9 L1082.1 635.9 L1088.2 645.4 L1083.8 652.3 L1070.0 659.2 L1066.5 656.6 L1073.4 647.1 L1074.3 640.2 Z M1269.5 217.6 h.6 M1292.4 240.6 h.6 M1305.5 257.0 h.6 M1313.7 276.6 h.6 M1318.7 288.0 h.6 M1336.2 289.0 h.6 M1378.7 292.0 h.6 M1052.3 624.6 h.6 M1076.7 667.0 h.6 M1359.7 357.0 h.6 M1233.7 405.0 h.6 M1287.2 243.0 h.6" fill="none" stroke="#a08eb4" stroke-width="19" stroke-linejoin="round" stroke-linecap="round"/>
<path d="M1212.5 186.5 L1217.0 184.5 L1221.5 185.0 L1222.0 190.0 L1223.0 194.7 L1227.0 198.0 L1230.5 201.3 L1233.0 199.5 L1236.0 202.5 L1242.0 205.4 L1248.0 207.5 L1253.5 211.0 L1257.0 214.0 L1260.0 217.6 L1262.0 222.0 L1263.3 227.5 L1264.5 232.0 L1265.0 235.6 L1264.0 240.0 L1266.5 243.8 L1269.0 248.0 L1271.5 253.6 L1271.0 257.0 L1273.0 260.2 L1272.0 264.0 L1276.4 268.4 L1281.0 270.0 L1285.0 272.0 L1287.0 277.0 L1290.0 280.5 L1292.0 276.0 L1291.0 270.0 L1289.0 264.0 L1286.2 256.0 L1289.0 256.5 L1292.7 260.2 L1296.0 264.0 L1299.3 268.4 L1300.0 274.0 L1301.0 280.0 L1301.0 286.4 L1306.0 292.0 L1312.4 297.8 L1320.0 302.5 L1327.0 306.0 L1333.0 307.0 L1338.6 306.0 L1345.0 302.0 L1351.7 297.8 L1356.0 294.5 L1361.5 293.0 L1368.0 293.5 L1373.0 295.4 L1374.6 301.0 L1371.3 308.4 L1368.0 321.5 L1363.0 331.3 L1359.0 339.5 L1358.2 347.6 L1356.6 351.7 L1355.0 346.0 L1348.4 346.0 L1340.2 349.3 L1333.7 357.5 L1332.0 364.0 L1333.7 369.0 L1330.4 380.4 L1325.5 390.2 L1319.0 403.3 L1312.4 414.7 L1307.5 426.2 L1301.0 436.0 L1292.7 442.6 L1286.2 440.0 L1281.3 441.8 L1276.0 438.0 L1279.7 427.8 L1282.0 416.4 L1283.0 403.3 L1281.3 390.2 L1276.4 380.4 L1268.2 373.8 L1258.4 367.3 L1248.6 362.4 L1242.8 356.6 L1242.8 351.7 L1247.0 347.6 L1256.7 344.4 L1265.0 341.0 L1268.2 333.0 L1269.0 324.7 L1268.2 316.5 L1269.0 308.4 L1269.8 300.2 L1268.2 293.0 L1265.0 279.8 L1260.0 268.4 L1253.5 257.0 L1245.3 243.8 L1233.8 227.5 L1222.4 211.0 L1216.0 197.0 Z M1211.9 398.5 L1217.0 398.0 L1221.4 399.3 L1216.0 401.5 L1215.0 405.0 L1219.9 408.7 L1222.1 407.9 L1222.7 417.1 L1224.0 425.6 L1231.0 423.4 L1240.7 413.4 L1244.8 405.0 L1249.0 411.6 L1257.8 415.3 L1258.6 420.8 L1251.7 430.0 L1251.2 435.5 L1256.7 442.2 L1261.2 439.0 L1254.3 451.3 L1250.8 454.8 L1243.9 465.0 L1238.7 475.5 L1230.0 486.0 L1219.6 494.6 L1216.2 503.3 L1215.3 513.6 L1220.0 515.0 L1224.5 518.0 L1222.0 522.5 L1214.5 524.0 L1205.8 521.0 L1198.9 524.0 L1188.5 532.7 L1179.1 538.0 L1172.2 548.4 L1168.7 560.5 L1165.2 570.9 L1161.8 581.3 L1158.3 590.0 L1153.1 596.9 L1146.2 605.5 L1139.3 615.9 L1130.6 624.6 L1121.9 631.5 L1111.5 633.3 L1101.1 629.8 L1090.7 628.0 L1087.3 622.9 L1075.2 619.4 L1068.2 616.0 L1056.1 615.0 L1044.0 613.3 L1039.7 606.4 L1038.8 596.9 L1044.0 586.5 L1050.9 576.1 L1057.8 565.7 L1068.2 555.3 L1076.9 546.6 L1085.6 540.6 L1093.2 534.4 L1105.3 527.5 L1119.2 518.8 L1131.3 510.2 L1143.4 501.5 L1153.8 492.9 L1164.2 482.5 L1172.9 468.6 L1176.3 454.8 L1178.9 444.4 L1185.0 439.2 L1191.9 427.0 L1195.4 416.6 L1198.9 408.0 Z M1075.2 635.9 L1082.1 635.9 L1088.2 645.4 L1083.8 652.3 L1070.0 659.2 L1066.5 656.6 L1073.4 647.1 L1074.3 640.2 Z M1269.5 217.6 h.6 M1292.4 240.6 h.6 M1305.5 257.0 h.6 M1313.7 276.6 h.6 M1318.7 288.0 h.6 M1336.2 289.0 h.6 M1378.7 292.0 h.6 M1052.3 624.6 h.6 M1076.7 667.0 h.6 M1359.7 357.0 h.6 M1233.7 405.0 h.6 M1287.2 243.0 h.6" fill="#aad3df" stroke="#aad3df" stroke-width="16.6" stroke-linejoin="round" stroke-linecap="round"/>
<path d="M1212.5 186.5 L1217.0 184.5 L1221.5 185.0 L1222.0 190.0 L1223.0 194.7 L1227.0 198.0 L1230.5 201.3 L1233.0 199.5 L1236.0 202.5 L1242.0 205.4 L1248.0 207.5 L1253.5 211.0 L1257.0 214.0 L1260.0 217.6 L1262.0 222.0 L1263.3 227.5 L1264.5 232.0 L1265.0 235.6 L1264.0 240.0 L1266.5 243.8 L1269.0 248.0 L1271.5 253.6 L1271.0 257.0 L1273.0 260.2 L1272.0 264.0 L1276.4 268.4 L1281.0 270.0 L1285.0 272.0 L1287.0 277.0 L1290.0 280.5 L1292.0 276.0 L1291.0 270.0 L1289.0 264.0 L1286.2 256.0 L1289.0 256.5 L1292.7 260.2 L1296.0 264.0 L1299.3 268.4 L1300.0 274.0 L1301.0 280.0 L1301.0 286.4 L1306.0 292.0 L1312.4 297.8 L1320.0 302.5 L1327.0 306.0 L1333.0 307.0 L1338.6 306.0 L1345.0 302.0 L1351.7 297.8 L1356.0 294.5 L1361.5 293.0 L1368.0 293.5 L1373.0 295.4 L1374.6 301.0 L1371.3 308.4 L1368.0 321.5 L1363.0 331.3 L1359.0 339.5 L1358.2 347.6 L1356.6 351.7 L1355.0 346.0 L1348.4 346.0 L1340.2 349.3 L1333.7 357.5 L1332.0 364.0 L1333.7 369.0 L1330.4 380.4 L1325.5 390.2 L1319.0 403.3 L1312.4 414.7 L1307.5 426.2 L1301.0 436.0 L1292.7 442.6 L1286.2 440.0 L1281.3 441.8 L1276.0 438.0 L1279.7 427.8 L1282.0 416.4 L1283.0 403.3 L1281.3 390.2 L1276.4 380.4 L1268.2 373.8 L1258.4 367.3 L1248.6 362.4 L1242.8 356.6 L1242.8 351.7 L1247.0 347.6 L1256.7 344.4 L1265.0 341.0 L1268.2 333.0 L1269.0 324.7 L1268.2 316.5 L1269.0 308.4 L1269.8 300.2 L1268.2 293.0 L1265.0 279.8 L1260.0 268.4 L1253.5 257.0 L1245.3 243.8 L1233.8 227.5 L1222.4 211.0 L1216.0 197.0 Z M1211.9 398.5 L1217.0 398.0 L1221.4 399.3 L1216.0 401.5 L1215.0 405.0 L1219.9 408.7 L1222.1 407.9 L1222.7 417.1 L1224.0 425.6 L1231.0 423.4 L1240.7 413.4 L1244.8 405.0 L1249.0 411.6 L1257.8 415.3 L1258.6 420.8 L1251.7 430.0 L1251.2 435.5 L1256.7 442.2 L1261.2 439.0 L1254.3 451.3 L1250.8 454.8 L1243.9 465.0 L1238.7 475.5 L1230.0 486.0 L1219.6 494.6 L1216.2 503.3 L1215.3 513.6 L1220.0 515.0 L1224.5 518.0 L1222.0 522.5 L1214.5 524.0 L1205.8 521.0 L1198.9 524.0 L1188.5 532.7 L1179.1 538.0 L1172.2 548.4 L1168.7 560.5 L1165.2 570.9 L1161.8 581.3 L1158.3 590.0 L1153.1 596.9 L1146.2 605.5 L1139.3 615.9 L1130.6 624.6 L1121.9 631.5 L1111.5 633.3 L1101.1 629.8 L1090.7 628.0 L1087.3 622.9 L1075.2 619.4 L1068.2 616.0 L1056.1 615.0 L1044.0 613.3 L1039.7 606.4 L1038.8 596.9 L1044.0 586.5 L1050.9 576.1 L1057.8 565.7 L1068.2 555.3 L1076.9 546.6 L1085.6 540.6 L1093.2 534.4 L1105.3 527.5 L1119.2 518.8 L1131.3 510.2 L1143.4 501.5 L1153.8 492.9 L1164.2 482.5 L1172.9 468.6 L1176.3 454.8 L1178.9 444.4 L1185.0 439.2 L1191.9 427.0 L1195.4 416.6 L1198.9 408.0 Z M1075.2 635.9 L1082.1 635.9 L1088.2 645.4 L1083.8 652.3 L1070.0 659.2 L1066.5 656.6 L1073.4 647.1 L1074.3 640.2 Z" fill="#f2efe9" stroke="#f2efe9" stroke-width=".6" stroke-linejoin="round"/>
<g clip-path="url(#cn)"><g filter="url(#veg)">
<ellipse cx="1243" cy="220" rx="9" ry="26" fill="#a4cc94" opacity="0.64" transform="rotate(-38 1243 220)"/>
<ellipse cx="1258" cy="244" rx="6" ry="14" fill="#a4cc94" opacity="0.51" transform="rotate(-30 1258 244)"/>
<ellipse cx="1293" cy="270" rx="4" ry="14" fill="#a4cc94" opacity="0.77" transform="rotate(-20 1293 270)"/>
<ellipse cx="1287.5" cy="244" rx="2" ry="5" fill="#a4cc94" opacity="0.68" transform="rotate(-20 1287.5 244)"/>
<ellipse cx="1356" cy="304" rx="14" ry="9" fill="#a4cc94" opacity="0.81" transform="rotate(-30 1356 304)"/>
<ellipse cx="1336" cy="322" rx="12" ry="22" fill="#a4cc94" opacity="0.81" transform="rotate(35 1336 322)"/>
<ellipse cx="1316" cy="349" rx="9" ry="22" fill="#a4cc94" opacity="0.77" transform="rotate(30 1316 349)"/>
<ellipse cx="1298" cy="397" rx="6" ry="30" fill="#a4cc94" opacity="0.72" transform="rotate(28 1298 397)"/>
<ellipse cx="1281" cy="322" rx="9" ry="18" fill="#a4cc94" opacity="0.47" transform="rotate(0 1281 322)"/>
<ellipse cx="1275" cy="360" rx="12" ry="10" fill="#a4cc94" opacity="0.51" transform="rotate(0 1275 360)"/>
<ellipse cx="1249" cy="354" rx="3.5" ry="3.5" fill="#a4cc94" opacity="0.68" transform="rotate(0 1249 354)"/>
<ellipse cx="1298" cy="352" rx="8" ry="10" fill="#a4cc94" opacity="0.42" transform="rotate(0 1298 352)"/>
<ellipse cx="1343" cy="347" rx="8" ry="8" fill="#a4cc94" opacity="0.34" transform="rotate(0 1343 347)"/>
<ellipse cx="1313" cy="382" rx="8" ry="20" fill="#a4cc94" opacity="0.30" transform="rotate(25 1313 382)"/>
</g></g>
<ellipse cx="1301.5" cy="336.5" rx="3.6" ry="3.4" fill="#aad3df" transform="rotate(-30 1301.5 336.5)"/>
<g clip-path="url(#cs)"><g filter="url(#vegd)">
<ellipse cx="1202" cy="427" rx="11" ry="24" fill="#a4cc94" opacity="0.95" transform="rotate(20 1202 427)"/>
<ellipse cx="1220" cy="424" rx="10" ry="10" fill="#a4cc94" opacity="0.6" transform="rotate(0 1220 424)"/>
<ellipse cx="1187" cy="462" rx="11" ry="26" fill="#a4cc94" opacity="0.95" transform="rotate(25 1187 462)"/>
<ellipse cx="1162" cy="498" rx="10" ry="28" fill="#a4cc94" opacity="0.95" transform="rotate(48 1162 498)"/>
<ellipse cx="1124" cy="527" rx="10" ry="30" fill="#a4cc94" opacity="0.95" transform="rotate(52 1124 527)"/>
<ellipse cx="1090" cy="551" rx="11" ry="22" fill="#a4cc94" opacity="0.85" transform="rotate(45 1090 551)"/>
<ellipse cx="1060" cy="582" rx="16" ry="28" fill="#a4cc94" opacity="0.62" transform="rotate(35 1060 582)"/>
<ellipse cx="1077" cy="648" rx="7" ry="13" fill="#a4cc94" opacity="0.8" transform="rotate(30 1077 648)"/>
<ellipse cx="1123" cy="624" rx="12" ry="6" fill="#a4cc94" opacity="0.5" transform="rotate(-20 1123 624)"/>
<ellipse cx="1240" cy="437" rx="8" ry="12" fill="#a4cc94" opacity="0.5" transform="rotate(30 1240 437)"/>
<ellipse cx="1148" cy="552" rx="5" ry="9" fill="#a4cc94" opacity="0.35" transform="rotate(20 1148 552)"/>
<ellipse cx="1188" cy="507" rx="10" ry="5" fill="#a4cc94" opacity="0.25" transform="rotate(0 1188 507)"/>
</g></g>
<path d="M1274.7 228.3 L1260.0 244.0 L1247.0 257.0 " fill="none" stroke="#b89cc0" stroke-width="1" opacity=".8" stroke-linejoin="round"/>
<path d="M1299.3 250.4 L1290.0 250.5 L1283.0 252.8 L1283.5 264.0 L1286.2 275.0 " fill="none" stroke="#b89cc0" stroke-width="1" opacity=".8" stroke-linejoin="round"/>
<path d="M1312.4 273.3 L1306.0 281.0 L1301.0 288.0 " fill="none" stroke="#b89cc0" stroke-width="1" opacity=".8" stroke-linejoin="round"/>
<path d="M1363.0 284.7 L1361.0 291.0 L1359.8 297.8 " fill="none" stroke="#b89cc0" stroke-width="1" opacity=".8" stroke-linejoin="round"/>
<path d="M1270.7 332.9 L1280.0 330.0 L1289.5 324.7 L1292.7 339.5 L1294.4 352.6 L1305.8 347.6 L1315.7 339.5 L1318.9 319.8 L1312.4 308.4 L1306.0 299.0 L1301.0 292.0 " fill="none" stroke="#b89cc0" stroke-width="1" opacity=".8" stroke-linejoin="round"/>
<path d="M1270.7 332.9 L1268.2 347.6 L1274.7 362.4 L1269.8 377.1 L1269.8 387.0 " fill="none" stroke="#b89cc0" stroke-width="1" opacity=".8" stroke-linejoin="round"/>
<path d="M1305.8 347.6 L1309.1 365.6 L1307.5 380.4 L1314.0 386.9 L1315.7 393.5 L1327.1 396.7 " fill="none" stroke="#b89cc0" stroke-width="1" opacity=".8" stroke-linejoin="round"/>
<path d="M1318.9 319.8 L1332.0 329.6 L1341.8 329.6 L1348.4 339.5 L1358.2 342.7 " fill="none" stroke="#b89cc0" stroke-width="1" opacity=".8" stroke-linejoin="round"/>
<path d="M1359.8 292.0 L1358.2 301.8 L1350.0 316.0 L1341.8 329.6 " fill="none" stroke="#b89cc0" stroke-width="1" opacity=".8" stroke-linejoin="round"/>
<path d="M1307.5 380.4 L1302.6 388.6 L1301.0 406.6 L1310.0 407.0 L1319.0 406.6 " fill="none" stroke="#b89cc0" stroke-width="1" opacity=".8" stroke-linejoin="round"/>
<path d="M1207.5 401.0 L1204.0 418.0 L1200.6 434.0 L1195.4 449.6 L1202.3 463.4 L1185.0 482.5 L1164.2 496.3 L1145.2 511.9 L1129.6 525.8 L1108.8 537.9 L1088.0 548.3 " fill="none" stroke="#b89cc0" stroke-width="1" opacity=".8" stroke-linejoin="round"/>
<path d="M1202.3 463.4 L1216.2 454.8 L1223.1 470.3 L1235.2 456.5 L1249.1 451.3 L1254.3 456.5 " fill="none" stroke="#b89cc0" stroke-width="1" opacity=".8" stroke-linejoin="round"/>
<path d="M1216.2 454.8 L1226.6 430.5 L1231.8 425.3 L1243.9 423.6 " fill="none" stroke="#b89cc0" stroke-width="1" opacity=".8" stroke-linejoin="round"/>
<path d="M1129.6 525.8 L1125.4 529.3 L1127.1 546.6 L1139.3 560.5 L1149.6 567.4 L1167.0 564.0 L1173.9 565.7 " fill="none" stroke="#b89cc0" stroke-width="1" opacity=".8" stroke-linejoin="round"/>
<path d="M1092.5 541.4 L1094.2 569.2 L1104.6 581.3 L1111.5 577.8 L1115.0 584.8 L1111.5 593.4 L1115.0 615.9 L1118.5 638.4 " fill="none" stroke="#b89cc0" stroke-width="1" opacity=".8" stroke-linejoin="round"/>
<path d="M1078.6 532.8 L1085.6 539.7 L1087.3 560.5 L1092.5 569.2 " fill="none" stroke="#b89cc0" stroke-width="1" opacity=".8" stroke-linejoin="round"/>
<ellipse cx="835.5999999999999" cy="23.400000000000006" rx="8.3" ry="8.3" fill="none" stroke="#a08eb4" stroke-width="1.3"/>
<ellipse cx="835.4000000000001" cy="38.80000000000001" rx="8.5" ry="8" fill="none" stroke="#a08eb4" stroke-width="1.3"/>
<ellipse cx="1081" cy="10.900000000000006" rx="8" ry="9.3" fill="none" stroke="#a08eb4" stroke-width="1.3"/>
<ellipse cx="1196" cy="177" rx="8.5" ry="8" fill="none" stroke="#a08eb4" stroke-width="1.3"/>
<ellipse cx="1042.5" cy="690" rx="10.8" ry="10" fill="none" stroke="#a08eb4" stroke-width="1.3"/>
<ellipse cx="1388" cy="678.5" rx="9.6" ry="9.2" fill="none" stroke="#a08eb4" stroke-width="1.3"/>
<ellipse cx="1381" cy="759.5" rx="10.6" ry="10.8" fill="none" stroke="#a08eb4" stroke-width="1.3"/>
<clipPath id="ck"><rect x="818" y="72" width="40" height="31.5"/></clipPath>
<g clip-path="url(#ck)"><ellipse cx="837.5" cy="93" rx="8.6" ry="12.5" fill="none" stroke="#a08eb4" stroke-width="1.3" transform="rotate(-28 837.5 93)"/><circle cx="835.5" cy="90.5" r="2.2" fill="none" stroke="#a08eb4" stroke-width=".7"/><circle cx="840.5" cy="97.5" r="2" fill="none" stroke="#a08eb4" stroke-width=".7"/></g>
<path d="M1030 784.5 Q1043 782 1046 796 Q1047 804 1043 808 Q1044 820 1031 822.5 Q1015 822 1014 807 Q1014 788 1030 784.5 Z" fill="none" stroke="#a08eb4" stroke-width="1.3"/>
<path d="M1030 795 L1034 795 L1032.5 804 L1033.5 810 L1029 813 L1024.5 809 L1027 803 Z" fill="#e6ecd0" filter="url(#bl1)"/>
<circle cx="1381" cy="759.5" r=".9" fill="#eef0e8"/><circle cx="1081" cy="9" r=".9" fill="#dfe8e4"/>
<circle cx="1269.5" cy="266.5" r="1.8" fill="#fff" stroke="#666" stroke-width=".8"/>
<text x="1269.5" y="283.5" font-family="DejaVu Sans,Liberation Sans,sans-serif" font-size="12.5"  text-anchor="middle" letter-spacing="0" fill="#444" stroke="#fff" stroke-width="2.2" stroke-opacity=".75" paint-order="stroke" stroke-linejoin="round" >Auckland</text>
<text x="1322" y="316" font-family="DejaVu Sans,Liberation Sans,sans-serif" font-size="11.5" font-style="italic" text-anchor="middle" letter-spacing="0" fill="#333" stroke="#fff" stroke-width="2.2" stroke-opacity=".75" paint-order="stroke" stroke-linejoin="round" >North Island</text>
<text x="1250" y="424" font-family="DejaVu Sans,Liberation Sans,sans-serif" font-size="14.2"  text-anchor="middle" letter-spacing="0.6" fill="#6c4a80" stroke="#fff" stroke-width="2.2" stroke-opacity=".75" paint-order="stroke" stroke-linejoin="round" >New Zealand /</text>
<text x="1249" y="442.5" font-family="DejaVu Sans,Liberation Sans,sans-serif" font-size="14.2"  text-anchor="middle" letter-spacing="0.6" fill="#6c4a80" stroke="#fff" stroke-width="2.2" stroke-opacity=".75" paint-order="stroke" stroke-linejoin="round" >Aotearoa</text>
<text x="1186" y="515" font-family="DejaVu Sans,Liberation Sans,sans-serif" font-size="10.8" font-style="italic" text-anchor="middle" letter-spacing="0" fill="#7c5a88" stroke="#fff" stroke-width="2.2" stroke-opacity=".75" paint-order="stroke" stroke-linejoin="round" >Canterbury</text>
<text x="1143" y="589" font-family="DejaVu Sans,Liberation Sans,sans-serif" font-size="10.8" font-style="italic" text-anchor="middle" letter-spacing="0" fill="#7c5a88" stroke="#fff" stroke-width="2.2" stroke-opacity=".75" paint-order="stroke" stroke-linejoin="round" >Otago</text>
<text x="1072" y="610" font-family="DejaVu Sans,Liberation Sans,sans-serif" font-size="10.8" font-style="italic" text-anchor="middle" letter-spacing="0" fill="#7c5a88" stroke="#fff" stroke-width="2.2" stroke-opacity=".75" paint-order="stroke" stroke-linejoin="round" >Southland</text>
<text x="0.5" y="143.3" font-family="DejaVu Sans,Liberation Sans,sans-serif" font-size="13" font-style="italic" text-anchor="start" letter-spacing="0" fill="#6a8fc4" stroke="#d4e8f2" stroke-width="1.8" stroke-opacity=".75" paint-order="stroke" stroke-linejoin="round" textLength="65" lengthAdjust="spacingAndGlyphs">Australian</text>
<text x="-3.5" y="160.8" font-family="DejaVu Sans,Liberation Sans,sans-serif" font-size="13" font-style="italic" text-anchor="start" letter-spacing="0" fill="#6a8fc4" stroke="#d4e8f2" stroke-width="1.8" stroke-opacity=".75" paint-order="stroke" stroke-linejoin="round" textLength="34" lengthAdjust="spacingAndGlyphs">Bight</text>
<rect x="1089.5" y="388.5" width="217" height="212" fill="rgba(255,0,0,.3)" stroke="rgba(255,0,0,.3)" stroke-width="5" stroke-linejoin="bevel"/>
</svg>
<div class="a" style="left:622px;top:168px;width:660px;height:614px;background:#f0f0f0;box-shadow:0 0 0 1px rgba(100,100,100,.5),0 2px 10px 1px rgba(0,0,0,.3)"></div>
<div class="a" style="left:622px;top:168px;width:660px;height:30px;background:#fff"></div>
<svg class="ic" style="left:630px;top:174px" width="16" height="16" viewBox="0 0 16 16">
<defs><linearGradient id="qg630" x1="0" y1="0" x2="0" y2="1"><stop offset="0" stop-color="#86ae28"/><stop offset="1" stop-color="#4f9a2c"/></linearGradient></defs>
<circle cx="8" cy="7.7" r="6.1" fill="none" stroke="url(#qg630)" stroke-width="3.1"/>
<path d="M9.6 9.3 L14.4 14.2" stroke="#559c2a" stroke-width="3.3" stroke-linecap="round"/>
<path d="M8.4 8 L9.6 9.3" stroke="#d8c030" stroke-width="2.8" stroke-linecap="butt"/>
<circle cx="7.7" cy="7.2" r="1.75" fill="#ee7913"/>
</svg>
<div class="t" style="left:651.50px;top:176.00px;font-size:12px;letter-spacing:-0.370px;color:#999">MetaSearch</div>
<svg class="ic" style="left:1261px;top:176px" width="12" height="12" viewBox="0 0 12 12"><path d="M1 1 L11 11 M11 1 L1 11" stroke="#555" stroke-width="1.1"/></svg>
<div class="a" style="left:633px;top:229px;width:636px;height:512px;border:1px solid #d9d9d9;background:#f0f0f0"></div>
<div class="a" style="left:691px;top:211px;width:63px;height:19px;border:1px solid #d9d9d9;background:#f0f0f0"></div>
<div class="a" style="left:753px;top:211px;width:62px;height:19px;border:1px solid #d9d9d9;background:#f0f0f0"></div>
<div class="a" style="left:633px;top:209px;width:59px;height:21px;border:1px solid #d9d9d9;border-bottom:none;background:#f3f3f3"></div>
<div class="t" style="left:644.20px;top:213.30px;font-size:11px;letter-spacing:-0.259px;">Search</div>
<div class="t" style="left:701.50px;top:213.80px;font-size:11px;letter-spacing:-0.272px;">Services</div>
<div class="t" style="left:765.50px;top:213.80px;font-size:11px;letter-spacing:-0.093px;">Settings</div>
<div class="a" style="left:644px;top:246px;width:614px;height:104px;border:1px solid #dcdcdc"></div>
<div class="a" style="left:650px;top:240px;width:24px;height:12px;background:#f0f0f0"></div>
<div class="t" style="left:652.00px;top:240.00px;font-size:11px;letter-spacing:-0.300px;">Find</div>
<div class="t" style="left:653.60px;top:266.80px;font-size:11px;letter-spacing:-0.200px;">Keywords</div>
<div class="a" style="left:707px;top:263px;width:189px;height:20px;background:#fff;border:1px solid #7a7a7a"></div>
<svg class="ic" style="left:715px;top:266px" width="14" height="14" viewBox="0 0 14 14"><circle cx="5.5" cy="5.5" r="4.2" fill="none" stroke="#8a8a8a" stroke-width="1.1"/><path d="M8.5 8.5 L13 13" stroke="#8a8a8a" stroke-width="1.3"/></svg>
<div class="t" style="left:735.50px;top:266.80px;font-size:11px;letter-spacing:-0.156px;">wind</div>
<svg class="ic" style="left:873px;top:267px" width="15" height="12" viewBox="0 0 15 12"><path d="M4.5 1 H14 V11 H4.5 L.8 6 Z" fill="#9a9a9a"/><path d="M6.8 3.5 L11.8 8.5 M11.8 3.5 L6.8 8.5" stroke="#fff" stroke-width="1.3"/></svg>
<div class="t" style="left:925.40px;top:266.80px;font-size:11px;letter-spacing:-0.516px;">From</div>
<div class="a" style="left:956px;top:263px;width:292px;height:20px;background:#e1e1e1;border:1px solid #adadad"></div>
<div class="t" style="left:959.00px;top:266.80px;font-size:11px;letter-spacing:-0.176px;">New Zealand: LINZ Data Service</div>
<svg class="ic" style="left:1233px;top:270px" width="11" height="7" viewBox="0 0 11 7"><path d="M1 1 L5.5 5.5 L10 1" stroke="#444" stroke-width="1.2" fill="none"/></svg>
<div class="t" style="left:653.60px;top:295.00px;font-size:11px;letter-spacing:-0.554px;">Xmax</div>
<div class="a" style="left:686px;top:291px;width:120px;height:20px;background:#fff;border:1px solid #7a7a7a"></div>
<div class="t" style="left:689.50px;top:295.00px;font-size:11px;letter-spacing:-0.518px;">180</div>
<div class="t" style="left:811.70px;top:295.00px;font-size:11px;letter-spacing:-0.579px;">Ymax</div>
<div class="a" style="left:844px;top:291px;width:106px;height:20px;background:#fff;border:1px solid #7a7a7a"></div>
<div class="t" style="left:847.00px;top:295.00px;font-size:11px;letter-spacing:-0.368px;">90</div>
<div class="a" style="left:957px;top:290px;width:189px;height:21px;background:#e1e1e1;border:1px solid #adadad;"></div><div class="t" style="left:1027.75px;top:293.60px;font-size:11px;letter-spacing:-0.143px;color:#000">Set global</div>
<div class="t" style="left:653.60px;top:323.20px;font-size:11px;letter-spacing:-0.790px;">Xmin</div>
<div class="a" style="left:686px;top:319px;width:120px;height:20px;background:#fff;border:1px solid #7a7a7a"></div>
<div class="t" style="left:689.00px;top:323.20px;font-size:11px;letter-spacing:-0.179px;">-180</div>
<div class="t" style="left:811.70px;top:323.20px;font-size:11px;letter-spacing:-0.815px;">Ymin</div>
<div class="a" style="left:844px;top:319px;width:106px;height:20px;background:#fff;border:1px solid #7a7a7a"></div>
<div class="t" style="left:846.50px;top:323.20px;font-size:11px;letter-spacing:-0.033px;">-90</div>
<div class="a" style="left:957px;top:319px;width:189px;height:21px;background:#e1e1e1;border:1px solid #adadad;"></div><div class="t" style="left:1023.50px;top:322.60px;font-size:11px;letter-spacing:0.158px;color:#000">Map extent</div>
<div class="a" style="left:1154px;top:319px;width:93px;height:21px;background:#e1e1e1;border:1px solid #adadad;"></div><div class="t" style="left:1183.85px;top:322.60px;font-size:11px;letter-spacing:-0.259px;color:#000">Search</div>
<div class="a" style="left:644px;top:363px;width:614px;height:365px;border:1px solid #dcdcdc"></div>
<div class="a" style="left:650px;top:357px;width:40px;height:12px;background:#f0f0f0"></div>
<div class="t" style="left:652.00px;top:357.00px;font-size:11px;letter-spacing:-0.183px;">Results</div>
<div class="t" style="left:653.60px;top:385.00px;font-size:11px;letter-spacing:-0.059px;">Showing 1 - 10 of 60 result(s)</div>
<div class="a" style="left:963px;top:381px;width:284px;height:21px;background:#e1e1e1;border:1px solid #adadad;"></div><div class="t" style="left:1046.75px;top:384.60px;font-size:11px;letter-spacing:-0.266px;color:#000">View Raw API Response</div>
<div class="a" style="left:654px;top:409px;width:594px;height:244px;background:#fff;border:1px solid #828790"></div>
<div class="a" style="left:754px;top:411px;width:1px;height:22px;background:#e5e5e5"></div>
<svg class="ic" style="left:700px;top:410px" width="9" height="5" viewBox="0 0 9 5"><path d="M.8 .8 L4.5 4 L8.2 .8" stroke="#888" stroke-width=".9" fill="none"/></svg>
<div class="t" style="left:659.30px;top:414.60px;font-size:12px;letter-spacing:-0.654px;">Type</div>
<div class="t" style="left:759.00px;top:414.60px;font-size:12px;letter-spacing:-0.005px;">Title</div>
<div class="t" style="left:658.60px;top:435.00px;font-size:12px;letter-spacing:-0.309px;">dataset</div>
<div class="t" style="left:758.30px;top:435.00px;font-size:12px;letter-spacing:-0.091px;">NZ Windmill Points (Topo, 1:250k)</div>
<div class="a" style="left:655px;top:450px;width:592px;height:17px;background:#f5f5f5"></div>
<div class="t" style="left:658.60px;top:452.00px;font-size:12px;letter-spacing:-0.309px;">dataset</div>
<div class="t" style="left:758.30px;top:452.00px;font-size:12px;letter-spacing:-0.235px;">Cook Islands Shelter Belt Centrelines (Topo, 1:25k, Zone4)</div>
<div class="t" style="left:658.60px;top:469.00px;font-size:12px;letter-spacing:-0.309px;">dataset</div>
<div class="t" style="left:758.30px;top:469.00px;font-size:12px;letter-spacing:-0.217px;">NZ Chatham Is Shelter Belt Centrelines (Topo, 1:50k)</div>
<div class="a" style="left:655px;top:484px;width:592px;height:17px;background:#f5f5f5"></div>
<div class="t" style="left:658.60px;top:486.00px;font-size:12px;letter-spacing:-0.309px;">dataset</div>
<div class="t" style="left:758.30px;top:486.00px;font-size:12px;letter-spacing:-0.111px;">NZ Chatham Is Windmill Points (Topo, 1:250k)</div>
<div class="t" style="left:658.60px;top:503.00px;font-size:12px;letter-spacing:-0.309px;">dataset</div>
<div class="t" style="left:758.30px;top:503.00px;font-size:12px;letter-spacing:-0.161px;">NZ Ross Dependency Windmill Points (ANT, 1:50k)</div>
<div class="a" style="left:655px;top:518px;width:592px;height:17px;background:#f5f5f5"></div>
<div class="t" style="left:658.60px;top:520.00px;font-size:12px;letter-spacing:-0.309px;">dataset</div>
<div class="t" style="left:758.30px;top:520.00px;font-size:12px;letter-spacing:-0.233px;">NZ Shelter Belt Centrelines (Topo, 1:50k)</div>
<div class="a" style="left:655px;top:535px;width:592px;height:17px;background:#d9d9d9"></div>
<div class="t" style="left:658.60px;top:537.00px;font-size:12px;letter-spacing:-0.309px;">dataset</div>
<div class="t" style="left:758.30px;top:537.00px;font-size:12px;letter-spacing:-0.091px;">NZ Windmill Points (Topo, 1:500k)</div>
<div class="a" style="left:655px;top:552px;width:592px;height:17px;background:#f5f5f5"></div>
<div class="t" style="left:658.60px;top:554.00px;font-size:12px;letter-spacing:-0.309px;">dataset</div>
<div class="t" style="left:758.30px;top:554.00px;font-size:12px;letter-spacing:-0.085px;">NZ Windmill Points (Topo, 1:50k)</div>
<div class="t" style="left:658.60px;top:571.00px;font-size:12px;letter-spacing:-0.309px;">dataset</div>
<div class="t" style="left:758.30px;top:571.00px;font-size:12px;letter-spacing:-0.117px;">NZ 8m Digital Elevation Model (2012)</div>
<div class="a" style="left:655px;top:586px;width:592px;height:17px;background:#f5f5f5"></div>
<div class="t" style="left:658.60px;top:588.00px;font-size:12px;letter-spacing:-0.309px;">dataset</div>
<div class="t" style="left:758.30px;top:588.00px;font-size:12px;letter-spacing:-0.215px;">Niue Shelter Belt Centrelines (Topo, 1:50k)</div>
<div class="a" style="left:655px;top:662px;width:143px;height:21px;background:#e1e1e1;border:1px solid #adadad;"></div><div class="t" style="left:719.00px;top:665.60px;font-size:11px;letter-spacing:1.076px;color:#000">&lt;&lt;</div>
<div class="a" style="left:806px;top:660px;width:143px;height:25px;background:#e1e1e1;border:1px solid #adadad;"></div><div class="t" style="left:874.25px;top:665.60px;font-size:11px;letter-spacing:0.076px;color:#000">&lt;</div>
<div class="a" style="left:963px;top:662px;width:138px;height:21px;background:#e1e1e1;border:1px solid #adadad;"></div><div class="t" style="left:1028.75px;top:665.60px;font-size:11px;letter-spacing:0.076px;color:#000">&gt;</div>
<div class="a" style="left:1109px;top:662px;width:138px;height:21px;background:#e1e1e1;border:1px solid #adadad;"></div><div class="t" style="left:1170.50px;top:665.60px;font-size:11px;letter-spacing:1.076px;color:#000">&gt;&gt;</div>
<div class="a" style="left:655px;top:693px;width:143px;height:25px;background:#cccccc;border:1px solid #bfbfbf"></div>
<div class="t" style="left:703.50px;top:698.50px;font-size:11px;letter-spacing:-0.108px;color:#7c7c7c">Add Data</div>
<svg class="ic" style="left:789px;top:711px" width="6" height="4" viewBox="0 0 6 4"><path d="M0 0 H6 L3 4Z" fill="#9a9a9a"/></svg>
<div class="a" style="left:1116px;top:749px;width:73px;height:21px;background:#e1e1e1;border:1px solid #adadad;"></div><div class="t" style="left:1139.50px;top:752.60px;font-size:11px;letter-spacing:-0.425px;color:#000">Close</div>
<div class="a" style="left:1197px;top:749px;width:73px;height:21px;background:#e1e1e1;border:1px solid #adadad;"></div><div class="t" style="left:1223.00px;top:752.60px;font-size:11px;letter-spacing:-0.406px;color:#000">Help</div>
<div class="a" style="left:0px;top:1014px;width:1916px;height:25px;background:#f0f0f0"></div>
<div class="a" style="left:4px;top:1018px;width:200px;height:20px;background:#fff;border:1px solid #7a7a7a"></div>
<svg class="ic" style="left:12px;top:1022px" width="13" height="13" viewBox="0 0 13 13"><circle cx="5.2" cy="5.2" r="4" fill="none" stroke="#8a8a8a" stroke-width="1.1"/><path d="M8 8 L12 12" stroke="#8a8a8a" stroke-width="1.3"/></svg>
<div class="t" style="left:32.50px;top:1022.00px;font-size:12px;letter-spacing:-0.392px;color:#808080">Type to locate (Ctrl+K)</div>
<div class="t" style="left:1118.30px;top:1022.00px;font-size:11px;letter-spacing:-0.111px;">Coordinate</div>
<div class="a" style="left:1175px;top:1019px;width:119px;height:19px;background:#fff;border:1px solid #7a7a7a"></div>
<div class="t" style="left:1185.00px;top:1022.00px;font-size:11px;letter-spacing:0.020px;">16952117,-3336039</div>
<svg class="ic" style="left:1296px;top:1019px" width="18" height="18" viewBox="0 0 18 18"><circle cx="8" cy="9" r="5.5" fill="none" stroke="#444" stroke-width="1"/><path d="M3 4 Q8 7 7 14 M6 3.5 Q11 7 10 14.5 M2.5 9 H13.5 M12 2 L15 5" stroke="#444" stroke-width="1" fill="none"/><circle cx="11" cy="12.5" r="2.2" fill="#fff" stroke="#444" stroke-width=".9"/></svg>
<div class="t" style="left:1325.00px;top:1022.00px;font-size:11px;letter-spacing:-0.423px;">Scale</div>
<div class="a" style="left:1354px;top:1019px;width:78px;height:19px;background:#fff;border:1px solid #7a7a7a"></div>
<div class="t" style="left:1357.50px;top:1022.00px;font-size:11px;letter-spacing:0.056px;">:15195625</div>
<svg class="ic" style="left:1417px;top:1025px" width="10" height="6" viewBox="0 0 10 6"><path d="M1 1 L5 5 L9 1" stroke="#444" stroke-width="1.1" fill="none"/></svg>
<svg class="ic" style="left:1442px;top:1019px" width="14" height="18" viewBox="0 0 14 18"><path d="M3.5 8 V5.5 Q3.5 2 7 2 Q10.5 2 10.5 5.5 V8" fill="none" stroke="#777" stroke-width="1.6"/><rect x="1.5" y="7.5" width="11" height="8.5" rx="1" fill="#666"/></svg>
<div class="t" style="left:1463.30px;top:1022.00px;font-size:11px;letter-spacing:-0.205px;">Magnifier</div>
<div class="a" style="left:1511px;top:1019px;width:82px;height:19px;background:#fff;border:1px solid #7a7a7a"></div>
<div class="t" style="left:1514.00px;top:1022.00px;font-size:11px;letter-spacing:-0.158px;">100%</div>
<div class="a" style="left:1577px;top:1020px;width:15px;height:8.5px;background:#e8e8e8;border:1px solid #b0b0b0"></div><div class="a" style="left:1577px;top:1028.5px;width:15px;height:8.5px;background:#e8e8e8;border:1px solid #b0b0b0"></div><svg class="ic" style="left:1581.5px;top:1022.5px" width="6" height="13" viewBox="0 0 6 13"><path d="M0 3.5 H6 L3 0Z M0 9.5 H6 L3 13Z" fill="#333"/></svg>
<div class="t" style="left:1601.30px;top:1022.00px;font-size:11px;letter-spacing:-0.009px;">Rotation</div>
<div class="a" style="left:1652px;top:1019px;width:80px;height:19px;background:#fff;border:1px solid #7a7a7a"></div>
<div class="t" style="left:1655.00px;top:1022.00px;font-size:11px;letter-spacing:0.151px;">0.0 °</div>
<div class="a" style="left:1716px;top:1020px;width:15px;height:8.5px;background:#e8e8e8;border:1px solid #b0b0b0"></div><div class="a" style="left:1716px;top:1028.5px;width:15px;height:8.5px;background:#e8e8e8;border:1px solid #b0b0b0"></div><svg class="ic" style="left:1720.5px;top:1022.5px" width="6" height="13" viewBox="0 0 6 13"><path d="M0 3.5 H6 L3 0Z M0 9.5 H6 L3 13Z" fill="#333"/></svg>
<div class="a" style="left:1738px;top:1022px;width:13px;height:13px;background:#fff;border:1px solid #333"></div>
<svg class="ic" style="left:1738px;top:1022px" width="13" height="13" viewBox="0 0 13 13"><path d="M2.5 6.5 L5.2 9.3 L10.5 3.2" stroke="#222" stroke-width="1.2" fill="none"/></svg>
<div class="t" style="left:1755.00px;top:1021.50px;font-size:11px;letter-spacing:-0.180px;">Render</div>
<svg class="ic" style="left:1808px;top:1021px" width="16" height="16" viewBox="0 0 16 16"><circle cx="8" cy="8" r="6.5" fill="none" stroke="#777" stroke-width="1"/><ellipse cx="8" cy="8" rx="3" ry="6.5" fill="none" stroke="#777" stroke-width=".9"/><path d="M1.5 8 H14.5 M2.5 4.5 H13.5 M2.5 11.5 H13.5 M8 1.5 V14.5" stroke="#777" stroke-width=".9"/><path d="M0 8 L3 6 V10Z M16 8 L13 6 V10Z" fill="#777"/></svg>
<div class="t" style="left:1827.00px;top:1022.00px;font-size:11px;letter-spacing:-0.488px;">EPSG:3857</div>
<svg class="ic" style="left:1896px;top:1020px" width="18" height="17" viewBox="0 0 18 17"><ellipse cx="9" cy="7.8" rx="8" ry="6.6" fill="#686868"/><path d="M10.5 13 Q13 15.5 17 15.6 Q14.5 14 14.2 11.5 Z" fill="#686868"/></svg>
</body></html>
